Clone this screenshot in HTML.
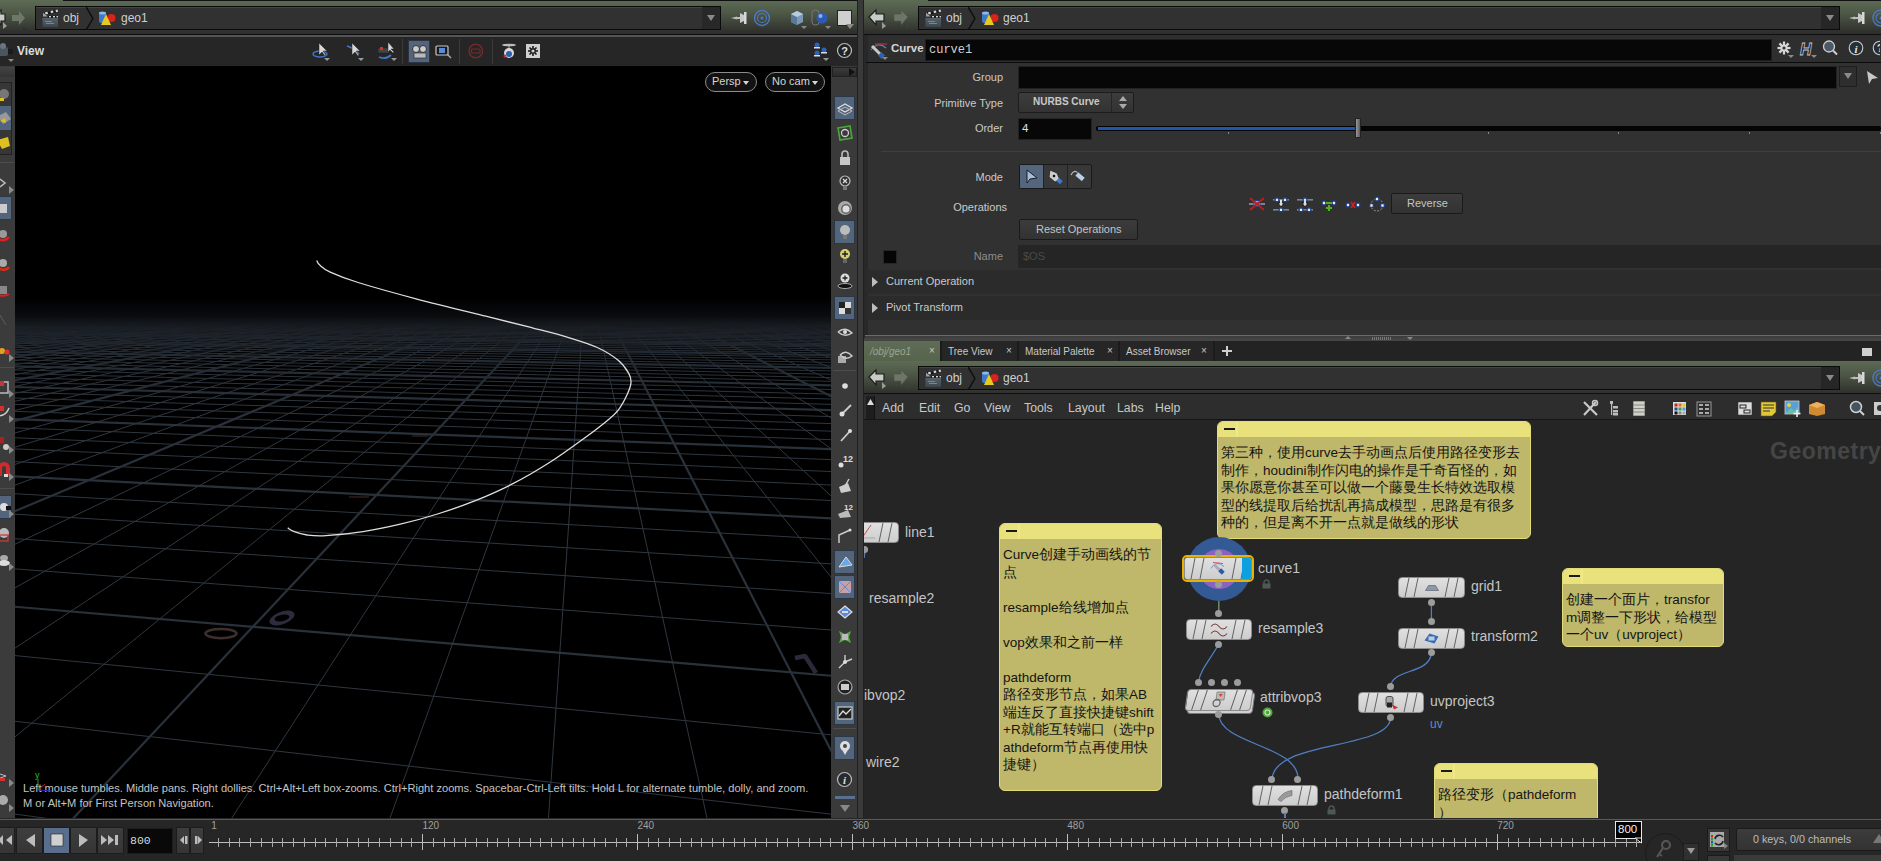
<!DOCTYPE html>
<html><head><meta charset="utf-8">
<style>
*{box-sizing:border-box}
html,body{margin:0;padding:0}
body{width:1881px;height:861px;overflow:hidden;background:#2b2b2b;position:relative;font-family:"Liberation Sans",sans-serif;color:#c8c8c8}
.a{position:absolute}
.nav{background:linear-gradient(#5d6b55 0px,#4c5645 14px,#363932 28px,#2f2f2f 32px)}
.pbox{position:absolute;background:#313131;border:1px solid #0a0a0a;box-shadow:inset 0 1px 0 #444}
.tk{stroke:#29313a;stroke-width:2.2}
.tn{stroke:#2f3740;stroke-width:1}
.lbl{position:absolute;font-size:12px;color:#c9c9c9;white-space:nowrap}
.note{position:absolute;background:#bfb76a;border-radius:6px;overflow:hidden;border:1px solid #e4dc78}
.note .hd{height:12px;background:#e8e17c;position:relative}
.note .hd:before{content:"";position:absolute;left:6px;top:6px;width:11px;height:2px;background:#1a1a1a}
.note .hd:after{content:"";position:absolute;left:18px;top:0;width:2px;height:15px;background:#efe78a}
.note .tx{font-size:13.5px;line-height:17.5px;color:#141414;padding:4px 3px;white-space:pre-wrap}
.node{position:absolute;height:20px;background:linear-gradient(#e4e4e4,#c9c9c9);border-radius:4px;border:1px solid #9a9a9a}
.nname{position:absolute;font-size:14px;color:#c4c4c4;white-space:nowrap}
.tbtn{position:absolute;top:827px;height:27px;background:linear-gradient(#3e3e3e,#353535);border:1px solid #1c1c1c;border-radius:1px}
.dot{position:absolute;width:7px;height:7px;border-radius:50%;background:#9c9c9c}
</style></head>
<body>

<!-- ============ LEFT PANE ============ -->
<div class="a nav" style="left:0;top:0;width:857px;height:35px"></div>
<div class="a" style="left:63px;top:0;width:794px;height:1px;background:#111"></div>
<div class="pbox" style="left:35px;top:6px;width:686px;height:24px"></div>
<svg width="0" height="0" style="position:absolute">
<defs>
<symbol id="i-obj" viewBox="0 0 16 18">
<rect x="0.5" y="9" width="15.5" height="9" fill="url(#objg)"/>
<path d="M3,12.5 h7 M4,14.5 h8" stroke="#8a9498" stroke-width="1.2" opacity="0.8"/>
<polygon points="0.5,4 15.5,0.5 16,3 1,6.5" fill="#151515"/>
<g fill="#d8d8d8"><polygon points="3,3.3 5.5,2.7 6,4.9 3.5,5.5"/><polygon points="8.5,2 11,1.4 11.5,3.6 9,4.2"/><polygon points="13.5,0.9 15.6,0.5 16,2.8 14,3.2"/></g>
<polygon points="1,3.5 5.5,7.5 1,7.5" fill="#9aa4a8"/>
<rect x="6" y="6.8" width="10" height="1.8" fill="#151515"/>
<g fill="#d8d8d8"><rect x="7" y="7" width="2" height="1.4"/><rect x="11" y="7" width="2" height="1.4"/><rect x="14.5" y="7" width="1.5" height="1.4"/></g>
</symbol>
<linearGradient id="objg" x1="0" y1="0" x2="0" y2="1"><stop offset="0" stop-color="#56626a"/><stop offset="1" stop-color="#3c464c"/></linearGradient>
<symbol id="i-geo" viewBox="0 0 18 15">
<rect x="1" y="1" width="7" height="11" rx="2" fill="#3f78c8"/>
<ellipse cx="4.5" cy="2" rx="3.5" ry="1.5" fill="#8fb6ea"/>
<circle cx="13.5" cy="7" r="4" fill="#d8221c"/>
<polygon points="8,3 13,14 3,14" fill="#e7c91f"/>
</symbol>
<symbol id="i-chev" viewBox="0 0 8 24"><polyline points="0,0 7,12 0,24" fill="none" stroke="#0e0e0e" stroke-width="1.5"/></symbol>
</defs></svg>
<div class="a" style="left:0;top:34px;width:857px;height:1px;background:#0c0c0c"></div>
<div class="a" style="left:0;top:35px;width:857px;height:2px;background:#555"></div>
<svg class="a" style="left:0;top:8px" width="30" height="22"><polygon points="-6,9 1,2 1,6 5,6 5,13 1,13 1,17" fill="#c9cbc6" stroke="#1d1f1c" stroke-width="1.2"/><polygon points="3,14 7,18 3,21" fill="#9a9c98"/><polygon points="12,7 19,7 19,3 25,10 19,17 19,13 12,13" fill="#6d7868"/><polygon points="23,19 27,22 23,25" fill="#2c3128"/></svg>
<svg class="a" style="left:42px;top:9px" width="16" height="18"><use href="#i-obj"/></svg>
<div class="a" style="left:63px;top:11px;font-size:12px;color:#cfcfcf">obj</div>
<svg class="a" style="left:86px;top:7px" width="8" height="23"><use href="#i-chev"/></svg>
<svg class="a" style="left:98px;top:11px" width="18" height="15"><use href="#i-geo"/></svg>
<div class="a" style="left:121px;top:11px;font-size:12px;color:#cfcfcf">geo1</div>
<div class="a" style="left:702px;top:7px;width:18px;height:22px;background:#282828"></div>
<div class="a" style="left:707px;top:15px;width:0;height:0;border-top:6px solid #8a8a8a;border-left:4px solid transparent;border-right:4px solid transparent"></div>

<div class="a" style="left:0;top:37px;width:857px;height:29px;background:#262626"></div>
<div class="a" style="left:17px;top:44px;font-size:12px;font-weight:bold;color:#dcdcdc">View</div>

<div class="a" style="left:0;top:66px;width:15px;height:752px;background:#3b3b3b"></div>
<div class="a" style="left:15px;top:66px;width:816px;height:752px;background:#000;overflow:hidden">
<svg width="816" height="752" style="position:absolute;left:0;top:0">
<defs>
<linearGradient id="fm" gradientUnits="userSpaceOnUse" x1="0" y1="250" x2="0" y2="340">
<stop offset="0" stop-color="#fff" stop-opacity="0"/>
<stop offset="0.18" stop-color="#fff" stop-opacity="0.5"/>
<stop offset="0.4" stop-color="#fff" stop-opacity="0.85"/>
<stop offset="1" stop-color="#fff" stop-opacity="1"/>
</linearGradient>
<mask id="gm" maskUnits="userSpaceOnUse" x="0" y="0" width="816" height="752"><rect x="0" y="0" width="816" height="752" fill="url(#fm)"/></mask>
<linearGradient id="haze" gradientUnits="userSpaceOnUse" x1="0" y1="232" x2="0" y2="290">
<stop offset="0" stop-color="#101317" stop-opacity="0"/>
<stop offset="0.5" stop-color="#101317" stop-opacity="1"/>
<stop offset="0.75" stop-color="#101317" stop-opacity="0.7"/>
<stop offset="1" stop-color="#101317" stop-opacity="0"/>
</linearGradient>
</defs>
<rect x="0" y="232" width="816" height="58" fill="url(#haze)"/>
<g mask="url(#gm)">
<line x1="-4.0" y1="747.5" x2="58.0" y2="756.0" class="tn"/>
<line x1="-4.0" y1="654.8" x2="820.0" y2="748.6" class="tn"/>
<line x1="-4.0" y1="589.2" x2="820.0" y2="669.2" class="tn"/>
<line x1="-4.0" y1="540.4" x2="820.0" y2="610.1" class="tk"/>
<line x1="-4.0" y1="502.6" x2="820.0" y2="564.3" class="tn"/>
<line x1="-4.0" y1="472.4" x2="820.0" y2="527.8" class="tn"/>
<line x1="-4.0" y1="447.9" x2="820.0" y2="498.1" class="tn"/>
<line x1="-4.0" y1="427.5" x2="820.0" y2="473.4" class="tn"/>
<line x1="-4.0" y1="410.2" x2="820.0" y2="452.5" class="tk"/>
<line x1="-4.0" y1="395.5" x2="820.0" y2="434.7" class="tn"/>
<line x1="-4.0" y1="382.7" x2="820.0" y2="419.2" class="tn"/>
<line x1="-4.0" y1="371.6" x2="820.0" y2="405.7" class="tn"/>
<line x1="-4.0" y1="361.7" x2="820.0" y2="393.8" class="tn"/>
<line x1="-4.0" y1="353.0" x2="820.0" y2="383.3" class="tk"/>
<line x1="-4.0" y1="345.2" x2="820.0" y2="373.8" class="tn"/>
<line x1="-4.0" y1="338.2" x2="820.0" y2="365.3" class="tn"/>
<line x1="-4.0" y1="331.9" x2="820.0" y2="357.7" class="tn"/>
<line x1="-4.0" y1="326.1" x2="820.0" y2="350.7" class="tn"/>
<line x1="-4.0" y1="320.9" x2="820.0" y2="344.3" class="tk"/>
<line x1="-4.0" y1="316.0" x2="820.0" y2="338.5" class="tn"/>
<line x1="-4.0" y1="311.6" x2="820.0" y2="333.1" class="tn"/>
<line x1="-4.0" y1="307.5" x2="820.0" y2="328.2" class="tn"/>
<line x1="-4.0" y1="303.8" x2="820.0" y2="323.6" class="tn"/>
<line x1="-4.0" y1="300.2" x2="820.0" y2="319.4" class="tk"/>
<line x1="-4.0" y1="297.0" x2="820.0" y2="315.4" class="tn"/>
<line x1="-4.0" y1="293.9" x2="820.0" y2="311.7" class="tn"/>
<line x1="-4.0" y1="291.1" x2="820.0" y2="308.3" class="tn"/>
<line x1="-4.0" y1="288.4" x2="820.0" y2="305.0" class="tn"/>
<line x1="-4.0" y1="285.9" x2="820.0" y2="302.0" class="tk"/>
<line x1="-4.0" y1="283.6" x2="820.0" y2="299.2" class="tn"/>
<line x1="-4.0" y1="281.3" x2="820.0" y2="296.5" class="tn"/>
<line x1="-4.0" y1="279.2" x2="820.0" y2="293.9" class="tn"/>
<line x1="-4.0" y1="277.2" x2="820.0" y2="291.5" class="tn"/>
<line x1="-4.0" y1="275.4" x2="820.0" y2="289.2" class="tk"/>
<line x1="-4.0" y1="273.6" x2="820.0" y2="287.1" class="tn"/>
<line x1="-4.0" y1="271.9" x2="820.0" y2="285.0" class="tn"/>
<line x1="-4.0" y1="270.3" x2="820.0" y2="283.1" class="tn"/>
<line x1="-4.0" y1="268.7" x2="820.0" y2="281.2" class="tn"/>
<line x1="-4.0" y1="267.3" x2="820.0" y2="279.5" class="tk"/>
<line x1="-4.0" y1="265.9" x2="820.0" y2="277.8" class="tn"/>
<line x1="-4.0" y1="264.6" x2="820.0" y2="276.2" class="tn"/>
<line x1="-4.0" y1="263.3" x2="820.0" y2="274.6" class="tn"/>
<line x1="-4.0" y1="262.1" x2="820.0" y2="273.1" class="tn"/>
<line x1="-4.0" y1="260.9" x2="820.0" y2="271.7" class="tk"/>
<line x1="-4.0" y1="259.8" x2="820.0" y2="270.4" class="tn"/>
<line x1="-4.0" y1="258.7" x2="820.0" y2="269.1" class="tn"/>
<line x1="-4.0" y1="257.7" x2="820.0" y2="267.8" class="tn"/>
<line x1="-4.0" y1="256.7" x2="820.0" y2="266.6" class="tn"/>
<line x1="-4.0" y1="255.7" x2="820.0" y2="265.4" class="tk"/>
<line x1="-4.0" y1="254.8" x2="820.0" y2="264.3" class="tn"/>
<line x1="-4.0" y1="253.9" x2="820.0" y2="263.2" class="tn"/>
<line x1="-4.0" y1="253.0" x2="820.0" y2="262.2" class="tn"/>
<line x1="-4.0" y1="252.2" x2="820.0" y2="261.2" class="tn"/>
<line x1="-4.0" y1="251.4" x2="820.0" y2="260.2" class="tk"/>
<line x1="-4.0" y1="250.6" x2="820.0" y2="259.3" class="tn"/>
<line x1="-4.0" y1="249.9" x2="820.0" y2="258.4" class="tn"/>
<line x1="-4.0" y1="249.2" x2="820.0" y2="257.5" class="tn"/>
<line x1="-4.0" y1="248.5" x2="820.0" y2="256.7" class="tn"/>
<line x1="-4.0" y1="247.8" x2="820.0" y2="255.9" class="tk"/>
<line x1="-4.0" y1="247.2" x2="820.0" y2="255.1" class="tn"/>
<line x1="-4.0" y1="246.5" x2="820.0" y2="254.3" class="tn"/>
<line x1="-4.0" y1="245.9" x2="820.0" y2="253.6" class="tn"/>
<line x1="-4.0" y1="245.3" x2="820.0" y2="252.9" class="tn"/>
<line x1="-4.0" y1="244.7" x2="820.0" y2="252.2" class="tk"/>
<line x1="-4.0" y1="244.2" x2="820.0" y2="251.5" class="tn"/>
<line x1="-4.0" y1="243.6" x2="820.0" y2="250.8" class="tn"/>
<line x1="-4.0" y1="243.1" x2="820.0" y2="250.2" class="tn"/>
<line x1="-4.0" y1="242.6" x2="820.0" y2="249.6" class="tn"/>
<line x1="-4.0" y1="242.1" x2="820.0" y2="248.9" class="tk"/>
<line x1="-4.0" y1="241.6" x2="820.0" y2="248.4" class="tn"/>
<line x1="-4.0" y1="241.1" x2="820.0" y2="247.8" class="tn"/>
<line x1="-4.0" y1="240.7" x2="820.0" y2="247.2" class="tn"/>
<line x1="-4.0" y1="240.2" x2="820.0" y2="246.7" class="tn"/>
<line x1="-4.0" y1="239.8" x2="820.0" y2="246.1" class="tk"/>
<line x1="-4.0" y1="240.1" x2="1.5" y2="239.8" class="tk"/>
<line x1="-4.0" y1="240.7" x2="10.0" y2="239.9" class="tn"/>
<line x1="-4.0" y1="241.4" x2="18.6" y2="239.9" class="tn"/>
<line x1="-4.0" y1="242.0" x2="27.2" y2="240.0" class="tn"/>
<line x1="-4.0" y1="242.7" x2="35.9" y2="240.1" class="tn"/>
<line x1="-4.0" y1="243.3" x2="44.6" y2="240.1" class="tk"/>
<line x1="-4.0" y1="244.0" x2="53.4" y2="240.2" class="tn"/>
<line x1="-4.0" y1="244.8" x2="62.1" y2="240.3" class="tn"/>
<line x1="-4.0" y1="245.6" x2="71.0" y2="240.3" class="tn"/>
<line x1="-4.0" y1="246.4" x2="79.8" y2="240.4" class="tn"/>
<line x1="-4.0" y1="247.2" x2="88.7" y2="240.5" class="tk"/>
<line x1="-4.0" y1="248.1" x2="97.7" y2="240.6" class="tn"/>
<line x1="-4.0" y1="249.0" x2="106.7" y2="240.6" class="tn"/>
<line x1="-4.0" y1="249.9" x2="115.7" y2="240.7" class="tn"/>
<line x1="-4.0" y1="250.9" x2="124.8" y2="240.8" class="tn"/>
<line x1="-4.0" y1="252.0" x2="133.9" y2="240.8" class="tk"/>
<line x1="-4.0" y1="253.0" x2="143.0" y2="240.9" class="tn"/>
<line x1="-4.0" y1="254.2" x2="152.2" y2="241.0" class="tn"/>
<line x1="-4.0" y1="255.4" x2="161.4" y2="241.0" class="tn"/>
<line x1="-4.0" y1="256.6" x2="170.7" y2="241.1" class="tn"/>
<line x1="-4.0" y1="257.9" x2="180.0" y2="241.2" class="tk"/>
<line x1="-4.0" y1="259.3" x2="189.4" y2="241.3" class="tn"/>
<line x1="-4.0" y1="260.8" x2="198.8" y2="241.3" class="tn"/>
<line x1="-4.0" y1="262.4" x2="208.2" y2="241.4" class="tn"/>
<line x1="-4.0" y1="264.0" x2="217.7" y2="241.5" class="tn"/>
<line x1="-4.0" y1="265.7" x2="227.2" y2="241.6" class="tk"/>
<line x1="-4.0" y1="267.6" x2="236.8" y2="241.6" class="tn"/>
<line x1="-4.0" y1="269.6" x2="246.4" y2="241.7" class="tn"/>
<line x1="-4.0" y1="271.7" x2="256.1" y2="241.8" class="tn"/>
<line x1="-4.0" y1="273.9" x2="265.8" y2="241.9" class="tn"/>
<line x1="-4.0" y1="276.3" x2="275.5" y2="241.9" class="tk"/>
<line x1="-4.0" y1="278.9" x2="285.3" y2="242.0" class="tn"/>
<line x1="-4.0" y1="281.7" x2="295.2" y2="242.1" class="tn"/>
<line x1="-4.0" y1="284.7" x2="305.1" y2="242.2" class="tn"/>
<line x1="-4.0" y1="287.9" x2="315.0" y2="242.2" class="tn"/>
<line x1="-4.0" y1="291.4" x2="325.0" y2="242.3" class="tk"/>
<line x1="-4.0" y1="295.3" x2="335.0" y2="242.4" class="tn"/>
<line x1="-4.0" y1="299.5" x2="345.1" y2="242.5" class="tn"/>
<line x1="-4.0" y1="304.1" x2="355.2" y2="242.5" class="tn"/>
<line x1="-4.0" y1="309.2" x2="365.4" y2="242.6" class="tn"/>
<line x1="-4.0" y1="314.8" x2="375.6" y2="242.7" class="tk"/>
<line x1="-4.0" y1="321.1" x2="385.9" y2="242.8" class="tn"/>
<line x1="-4.0" y1="328.2" x2="396.2" y2="242.9" class="tn"/>
<line x1="-4.0" y1="336.2" x2="406.6" y2="242.9" class="tn"/>
<line x1="-4.0" y1="345.4" x2="417.0" y2="243.0" class="tn"/>
<line x1="-4.0" y1="355.9" x2="427.5" y2="243.1" class="tk"/>
<line x1="-4.0" y1="368.1" x2="438.0" y2="243.2" class="tn"/>
<line x1="-4.0" y1="382.5" x2="448.6" y2="243.3" class="tn"/>
<line x1="-4.0" y1="399.8" x2="459.2" y2="243.4" class="tn"/>
<line x1="-4.0" y1="420.7" x2="469.9" y2="243.4" class="tn"/>
<line x1="-4.0" y1="446.8" x2="480.6" y2="243.5" class="tk"/>
<line x1="-4.0" y1="480.1" x2="491.4" y2="243.6" class="tn"/>
<line x1="-4.0" y1="524.0" x2="502.2" y2="243.7" class="tn"/>
<line x1="-4.0" y1="584.7" x2="513.1" y2="243.8" class="tn"/>
<line x1="-4.0" y1="674.1" x2="524.1" y2="243.9" class="tn"/>
<line x1="54.8" y1="756.0" x2="535.1" y2="243.9" class="tk"/>
<line x1="214.2" y1="756.0" x2="546.1" y2="244.0" class="tn"/>
<line x1="373.6" y1="756.0" x2="557.2" y2="244.1" class="tn"/>
<line x1="533.2" y1="756.0" x2="568.4" y2="244.2" class="tn"/>
<line x1="692.9" y1="756.0" x2="579.6" y2="244.3" class="tn"/>
<line x1="820.0" y1="692.3" x2="590.9" y2="244.4" class="tk"/>
<line x1="820.0" y1="516.0" x2="602.2" y2="244.5" class="tn"/>
<line x1="820.0" y1="433.5" x2="613.6" y2="244.5" class="tn"/>
<line x1="820.0" y1="385.6" x2="625.1" y2="244.6" class="tn"/>
<line x1="820.0" y1="354.3" x2="636.6" y2="244.7" class="tn"/>
<line x1="820.0" y1="332.3" x2="648.1" y2="244.8" class="tk"/>
<line x1="820.0" y1="315.9" x2="659.7" y2="244.9" class="tn"/>
<line x1="820.0" y1="303.3" x2="671.4" y2="245.0" class="tn"/>
<line x1="820.0" y1="293.3" x2="683.2" y2="245.1" class="tn"/>
<line x1="820.0" y1="285.1" x2="695.0" y2="245.2" class="tn"/>
<line x1="820.0" y1="278.3" x2="706.8" y2="245.3" class="tk"/>
<line x1="820.0" y1="272.6" x2="718.7" y2="245.4" class="tn"/>
<line x1="820.0" y1="267.7" x2="730.7" y2="245.5" class="tn"/>
<line x1="820.0" y1="263.5" x2="742.8" y2="245.5" class="tn"/>
<line x1="820.0" y1="259.8" x2="754.9" y2="245.6" class="tn"/>
<line x1="820.0" y1="256.6" x2="767.1" y2="245.7" class="tk"/>
<line x1="820.0" y1="253.7" x2="779.3" y2="245.8" class="tn"/>
<line x1="820.0" y1="251.1" x2="791.6" y2="245.9" class="tn"/>
<line x1="820.0" y1="248.8" x2="804.0" y2="246.0" class="tn"/>
<line x1="820.0" y1="246.7" x2="816.4" y2="246.1" class="tn"/>
</g>
<ellipse cx="206" cy="567.6" rx="15.5" ry="4.6" fill="none" stroke="#3e2f2c" stroke-width="2.6"/>
<g transform="translate(267,552) skewX(-38)"><ellipse cx="0" cy="0" rx="9" ry="5.5" fill="none" stroke="#2e2b3d" stroke-width="4"/></g>
<path d="M780,592 L790,590 L801,607" fill="none" stroke="#2c2a3a" stroke-width="4.5" stroke-linejoin="bevel"/>
<line x1="334" y1="431" x2="354" y2="431" stroke="#3a2422" stroke-width="1.2"/>
<line x1="397" y1="370" x2="413" y2="370" stroke="#3a2422" stroke-width="1.2"/>
<path d="M301.7,194.5 C302.2,195.3 302.4,197.2 304.7,199.1 C306.9,201.0 308.8,203.2 315.2,206.1 C321.6,209.0 328.8,212.1 343.1,216.5 C357.4,220.9 379.8,227.2 401.1,232.8 C422.4,238.4 451.4,245.4 470.8,250.2 C490.2,255.0 503.7,258.3 517.2,261.8 C530.8,265.3 541.2,267.8 552.1,271.1 C563.0,274.4 573.8,277.6 582.3,281.5 C590.8,285.4 598.0,290.0 603.2,294.3 C608.4,298.6 611.5,303.4 613.6,307.1 C615.7,310.8 616.2,312.9 616.0,316.4 C615.8,319.9 614.5,323.4 612.4,328.0 C610.3,332.6 606.6,339.7 603.2,344.2 C599.8,348.7 597.1,350.5 591.8,354.9 C586.5,359.3 580.9,363.7 571.3,370.7 C561.7,377.7 546.5,388.9 534.1,396.8 C521.7,404.7 509.3,411.9 496.9,418.2 C484.5,424.5 472.1,429.9 459.7,434.9 C447.3,439.9 434.9,444.1 422.5,448.0 C410.1,451.9 397.7,455.3 385.3,458.2 C372.9,461.1 360.4,463.7 348.0,465.6 C335.6,467.5 320.1,469.1 310.8,469.7 C301.5,470.3 297.5,469.7 292.2,469.0 C286.9,468.3 282.4,466.8 279.2,465.6 C275.9,464.4 273.8,462.5 272.7,461.9" fill="none" stroke="#dedede" stroke-width="1.3"/>
</svg>
</div>
<div class="a" style="left:831px;top:66px;width:26px;height:752px;background:#3a3a3a"></div>

<!-- divider -->
<div class="a" style="left:857px;top:0;width:7px;height:818px;background:#202020"></div>
<div class="a" style="left:858px;top:0;width:5px;height:818px;background:#3a3a3a"></div>

<!-- left toolbar -->
<svg class="a" style="left:0;top:40px" width="16" height="24"><rect x="-2" y="7" width="10" height="9" rx="2" fill="#4a5560"/><circle cx="3" cy="6" r="3" fill="#6a7580"/><rect x="8" y="9" width="5" height="5" fill="#1a1a1a"/><polygon points="8,19 14,19 11,22" fill="#8a8a8a"/></svg>
<svg class="a" style="left:310px;top:40px" width="24" height="24"><ellipse cx="10" cy="14" rx="7" ry="3" fill="none" stroke="#3d74c4" stroke-width="1.6"/><polygon points="9,3 9,15 12,12 15,16 16,15 13,11 17,11" fill="#d8d8d8" stroke="#222" stroke-width="0.5"/><polygon points="14,18 20,18 17,21" fill="#9a9a9a"/></svg>
<svg class="a" style="left:344px;top:40px" width="24" height="24"><path d="M3,6 Q10,8 15,14" fill="none" stroke="#3d74c4" stroke-width="1.8"/><polygon points="8,3 8,15 11,12 14,16 15,15 12,11 16,11" fill="#d8d8d8" stroke="#222" stroke-width="0.5"/><polygon points="14,18 20,18 17,21" fill="#9a9a9a"/></svg>
<svg class="a" style="left:376px;top:40px" width="24" height="24"><rect x="2" y="8" width="11" height="5" fill="#444" stroke="#222" stroke-width="0.6"/><rect x="4" y="7" width="3" height="3" fill="#c33"/><path d="M3,17 Q10,20 15,15" fill="none" stroke="#3d74c4" stroke-width="1.8"/><polygon points="12,2 12,12 14,10 17,13 18,12 15,9 18,9" fill="#d8d8d8" stroke="#222" stroke-width="0.5"/><polygon points="15,18 21,18 18,21" fill="#9a9a9a"/></svg>
<div class="a" style="left:402px;top:39px;width:1px;height:25px;background:#3a3a3a"></div>
<div class="a" style="left:408px;top:40px;width:22px;height:23px;background:#52657d;border:1px solid #2b3440"></div>
<svg class="a" style="left:409px;top:41px" width="22" height="22"><circle cx="7" cy="8" r="3.5" fill="#ccc" stroke="#333"/><circle cx="14" cy="8" r="3.5" fill="#ccc" stroke="#333"/><rect x="5" y="12" width="12" height="5" fill="#bbb" stroke="#333" stroke-width="0.7"/></svg>
<svg class="a" style="left:434px;top:42px" width="20" height="20"><rect x="2" y="4" width="12" height="9" rx="1" fill="#1a1a1a" stroke="#c8c8c8" stroke-width="1.2"/><rect x="5" y="6" width="6" height="5" fill="#5a8ad8"/><line x1="13" y1="12" x2="17" y2="16" stroke="#aaa" stroke-width="1.5"/></svg>
<div class="a" style="left:459px;top:39px;width:1px;height:25px;background:#3a3a3a"></div>
<svg class="a" style="left:467px;top:43px" width="18" height="18"><circle cx="8.75" cy="8" r="6.8" fill="none" stroke="#7b2a2a" stroke-width="1.3"/><rect x="4.5" y="6" width="8.5" height="4" rx="1" fill="none" stroke="#7b2a2a" stroke-width="1.1"/></svg>
<div class="a" style="left:492px;top:39px;width:1px;height:25px;background:#3a3a3a"></div>
<svg class="a" style="left:500px;top:42px" width="18" height="18"><ellipse cx="9" cy="3" rx="7" ry="1.3" fill="#bbb"/><line x1="9" y1="3" x2="9" y2="8" stroke="#bbb"/><circle cx="9" cy="11" r="5" fill="#d8d8d8"/><circle cx="9" cy="12" r="3" fill="#2a60b0"/><circle cx="5" cy="14" r="1.5" fill="#c33"/></svg>
<div class="a" style="left:526px;top:44px;width:14px;height:14px;background:#d0d0d0"></div>
<svg class="a" style="left:526px;top:44px" width="14" height="14"><g stroke="#1a1a1a" stroke-width="1.6"><line x1="7" y1="2" x2="7" y2="12"/><line x1="2" y1="7" x2="12" y2="7"/><line x1="3.5" y1="3.5" x2="10.5" y2="10.5"/><line x1="10.5" y1="3.5" x2="3.5" y2="10.5"/></g><circle cx="7" cy="7" r="2.2" fill="#d0d0d0" stroke="#1a1a1a" stroke-width="1.2"/></svg>
<svg class="a" style="left:810px;top:41px" width="22" height="22"><circle cx="7" cy="4" r="2.5" fill="#2d62b8"/><rect x="4" y="6" width="6" height="1.5" fill="#ddd"/><circle cx="14" cy="9" r="2.5" fill="#2d62b8"/><rect x="11" y="11" width="6" height="1.5" fill="#ddd"/><circle cx="7" cy="12" r="2.5" fill="#2d62b8"/><rect x="4" y="14" width="6" height="1.5" fill="#ddd"/><polygon points="13,17 19,17 16,20" fill="#9a9a9a"/></svg>
<svg class="a" style="left:836px;top:42px" width="17" height="17"><circle cx="8.5" cy="8.5" r="7" fill="#1d2226" stroke="#bbb" stroke-width="1.2"/><text x="8.5" y="12.5" font-size="11" font-weight="bold" fill="#e0e0e0" text-anchor="middle" font-family="Liberation Sans">?</text></svg>
<!-- persp -->
<div class="a" style="left:705px;top:72px;width:52px;height:20px;border:1px solid #8c8c8c;border-radius:10px;background:#121212"></div>
<div class="a" style="left:712px;top:75px;font-size:11px;color:#d6d6d6">Persp</div>
<div class="a" style="left:743px;top:81px;width:0;height:0;border-top:4px solid #d6d6d6;border-left:3.5px solid transparent;border-right:3.5px solid transparent"></div>
<div class="a" style="left:765px;top:72px;width:60px;height:20px;border:1px solid #8c8c8c;border-radius:10px;background:#121212"></div>
<div class="a" style="left:772px;top:75px;font-size:11px;color:#d6d6d6">No cam</div>
<div class="a" style="left:812px;top:81px;width:0;height:0;border-top:4px solid #d6d6d6;border-left:3.5px solid transparent;border-right:3.5px solid transparent"></div>
<!-- help text -->
<div class="a" style="left:23px;top:781px;font-size:11.1px;line-height:15px;color:#c4c4c4;white-space:nowrap">Left mouse tumbles. Middle pans. Right dollies. Ctrl+Alt+Left box-zooms. Ctrl+Right zooms. Spacebar-Ctrl-Left tilts. Hold L for alternate tumble, dolly, and zoom.<br>M or Alt+M for First Person Navigation.</div>
<svg class="a" style="left:28px;top:770px" width="40" height="25"><text x="7" y="8" font-size="9" fill="#2ac02a" font-family="Liberation Sans">y</text><line x1="10" y1="9" x2="10" y2="20" stroke="#2a9a2a" stroke-width="1"/><line x1="10" y1="20" x2="17" y2="14" stroke="#c02a2a" stroke-width="1"/><line x1="10" y1="20" x2="24" y2="21" stroke="#2a2ac0" stroke-width="1"/></svg>
<!-- columns -->
<div class="a" style="left:832px;top:67px;width:25px;height:10px;background:linear-gradient(#3c3c3c,#2a2a2a);border:1px solid #222"></div>
<div class="a" style="left:849px;top:68px;width:0;height:0;border-left:6px solid #111;border-top:4px solid transparent;border-bottom:4px solid transparent"></div>
<div class="a" style="left:834px;top:96px;width:21px;height:24px;background:#52657c;border:1px solid #2c3745"></div>
<svg class="a" style="left:836px;top:99px" width="18" height="18"><polygon points="2,9 9,5 16,9 9,13" fill="none" stroke="#ddd" stroke-width="1.3"/><polygon points="2,12 9,8 16,12 9,16" fill="none" stroke="#bbb" stroke-width="1"/></svg>
<svg class="a" style="left:836px;top:124px" width="18" height="18"><polygon points="2,4 14,2 16,14 4,16" fill="none" stroke="#4aa83a" stroke-width="1.6"/><circle cx="9" cy="9" r="3.5" fill="none" stroke="#ccc" stroke-width="1.3"/></svg>
<svg class="a" style="left:836px;top:149px" width="18" height="18"><rect x="4" y="8" width="10" height="8" fill="#c8c8c8"/><path d="M6,8 V5 a3,3 0 0 1 6,0 V8" fill="none" stroke="#bbb" stroke-width="1.6"/></svg>
<svg class="a" style="left:836px;top:174px" width="18" height="18"><circle cx="9" cy="7" r="5" fill="#333" stroke="#bbb" stroke-width="1.2"/><path d="M7,5 l4,4 M11,5 l-4,4" stroke="#ddd" stroke-width="1.2"/><rect x="7" y="12" width="4" height="4" fill="#777"/></svg>
<svg class="a" style="left:836px;top:199px" width="18" height="18"><circle cx="9" cy="9" r="7" fill="#aaa"/><circle cx="10" cy="10" r="5" fill="#666"/><circle cx="10" cy="10" r="3.5" fill="#ddd"/></svg>
<div class="a" style="left:834px;top:220px;width:21px;height:24px;background:#52657c;border:1px solid #2c3745"></div>
<svg class="a" style="left:836px;top:223px" width="18" height="18"><circle cx="9" cy="7" r="5" fill="#bbb"/><rect x="7" y="12" width="4" height="4" fill="#777"/></svg>
<svg class="a" style="left:836px;top:247px" width="18" height="18"><circle cx="9" cy="7" r="5" fill="#d8d070"/><path d="M9,4 v6 M6,7 h6" stroke="#222" stroke-width="1.5"/><rect x="7" y="12" width="4" height="4" fill="#666"/></svg>
<svg class="a" style="left:836px;top:272px" width="18" height="18"><circle cx="9" cy="6" r="4.5" fill="#ddd"/><path d="M9,3.5 v5 M6.5,6 h5" stroke="#222" stroke-width="1.3"/><ellipse cx="9" cy="14" rx="7" ry="2.5" fill="#111" stroke="#aaa"/></svg>
<div class="a" style="left:834px;top:296px;width:21px;height:24px;background:#52657c;border:1px solid #2c3745"></div>
<svg class="a" style="left:836px;top:299px" width="18" height="18"><rect x="3" y="3" width="12" height="12" fill="#ddd"/><rect x="3" y="3" width="6" height="6" fill="#222"/><rect x="9" y="9" width="6" height="6" fill="#333"/></svg>
<svg class="a" style="left:836px;top:324px" width="18" height="18"><path d="M2,8 Q9,2 16,9 Q9,14 2,8" fill="none" stroke="#ccc" stroke-width="1.5"/><circle cx="9" cy="8" r="2" fill="#ddd"/></svg>
<svg class="a" style="left:836px;top:347px" width="18" height="18"><rect x="2" y="9" width="8" height="7" fill="#aaa"/><path d="M4,8 Q10,2 16,9 Q10,14 4,8" fill="none" stroke="#ccc" stroke-width="1.5"/></svg>
<svg class="a" style="left:836px;top:377px" width="18" height="18"><circle cx="9" cy="9" r="2.8" fill="#ddd"/></svg>
<svg class="a" style="left:836px;top:402px" width="18" height="18"><line x1="15" y1="3" x2="7" y2="11" stroke="#ccc" stroke-width="1.8"/><circle cx="6" cy="12" r="2.5" fill="#ddd"/></svg>
<svg class="a" style="left:836px;top:427px" width="18" height="18"><line x1="15" y1="3" x2="5" y2="14" stroke="#ccc" stroke-width="1.8"/><circle cx="14" cy="4" r="2" fill="#ddd"/></svg>
<svg class="a" style="left:836px;top:452px" width="18" height="18"><circle cx="5" cy="13" r="2.5" fill="#ddd"/><text x="7" y="10" font-size="9" font-weight="bold" fill="#ddd" font-family="Liberation Sans">12</text></svg>
<svg class="a" style="left:836px;top:477px" width="18" height="18"><polygon points="3,10 12,6 15,14 5,16" fill="#ccc"/><line x1="13" y1="2" x2="9" y2="9" stroke="#ccc" stroke-width="1.5"/></svg>
<svg class="a" style="left:836px;top:502px" width="18" height="18"><polygon points="2,12 12,8 15,15 4,16" fill="#bbb"/><text x="8" y="8" font-size="8" font-weight="bold" fill="#ddd" font-family="Liberation Sans">12</text></svg>
<svg class="a" style="left:836px;top:527px" width="18" height="18"><path d="M3,16 V8 L14,3" fill="none" stroke="#ccc" stroke-width="1.5"/><circle cx="14" cy="3" r="1.5" fill="#ddd"/></svg>
<div class="a" style="left:834px;top:550px;width:21px;height:24px;background:#52657c;border:1px solid #2c3745"></div>
<svg class="a" style="left:836px;top:553px" width="18" height="18"><polygon points="3,14 10,4 16,12" fill="#6aa8e8"/><polygon points="3,14 16,12 10,4" fill="none" stroke="#ddd" stroke-width="1"/></svg>
<div class="a" style="left:834px;top:575px;width:21px;height:24px;background:#52657c;border:1px solid #2c3745"></div>
<svg class="a" style="left:836px;top:578px" width="18" height="18"><rect x="3" y="3" width="12" height="12" fill="#c8a0a8"/><path d="M3,3 l12,12 M15,3 l-12,12" stroke="#5a8ad8" stroke-width="1"/></svg>
<svg class="a" style="left:836px;top:603px" width="18" height="18"><polygon points="9,3 16,9 9,15 2,9" fill="#5a8ad8" stroke="#ddd" stroke-width="1.2"/><rect x="6" y="8" width="6" height="2" fill="#ddd"/></svg>
<svg class="a" style="left:836px;top:628px" width="18" height="18"><polygon points="3,3 9,6 15,3 13,9 15,15 9,12 3,15 5,9" fill="#5aa84a"/><rect x="6" y="6" width="6" height="6" fill="#bbb"/></svg>
<svg class="a" style="left:836px;top:653px" width="18" height="18"><path d="M9,9 L3,15 M9,9 L16,6 M9,9 L9,2" stroke="#ccc" stroke-width="1.4"/><circle cx="9" cy="9" r="2" fill="#ddd"/></svg>
<svg class="a" style="left:836px;top:678px" width="18" height="18"><circle cx="9" cy="9" r="7" fill="#222" stroke="#aaa" stroke-width="1.2"/><rect x="5" y="6" width="8" height="6" fill="#ccc"/></svg>
<div class="a" style="left:834px;top:701px;width:21px;height:24px;background:#52657c;border:1px solid #2c3745"></div>
<svg class="a" style="left:836px;top:704px" width="18" height="18"><rect x="2" y="3" width="14" height="12" fill="#222" stroke="#ccc" stroke-width="1.2"/><path d="M3,12 L7,7 L10,10 L15,5" fill="none" stroke="#ddd" stroke-width="1.3"/></svg>
<div class="a" style="left:834px;top:736px;width:21px;height:24px;background:#52657c;border:1px solid #2c3745"></div>
<svg class="a" style="left:836px;top:739px" width="18" height="18"><circle cx="9" cy="7" r="5" fill="#ddd"/><polygon points="5,9 13,9 9,16" fill="#ddd"/><circle cx="9" cy="7" r="2" fill="#444"/></svg>
<div class="a" style="left:833px;top:370px;width:23px;height:1px;background:#4d4d4d"></div>
<div class="a" style="left:833px;top:728px;width:23px;height:1px;background:#4d4d4d"></div>
<svg class="a" style="left:836px;top:771px" width="17" height="17"><circle cx="8.5" cy="8.5" r="7" fill="#262b30" stroke="#bbb" stroke-width="1.2"/><text x="8.5" y="13" font-size="11" font-style="italic" font-weight="bold" fill="#e0e0e0" text-anchor="middle" font-family="Liberation Serif">i</text></svg>
<div class="a" style="left:835px;top:796px;width:20px;height:3px;background:#5a7090"></div>
<div class="a" style="left:840px;top:805px;width:0;height:0;border-top:7px solid #888;border-left:5px solid transparent;border-right:5px solid transparent"></div>
<div class="a" style="left:0;top:67px;width:14px;height:10px;background:linear-gradient(#444,#333)"></div>
<div class="a" style="left:-2px;top:82px;width:14px;height:73px;background:#363636;border:1px solid #222"></div>
<div class="a" style="left:0;top:106px;width:11px;height:24px;background:#52657c"></div>
<svg class="a" style="left:0;top:87px" width="14" height="17"><circle cx="4" cy="7" r="5" fill="#777"/><rect x="0" y="11" width="4" height="3" fill="#e0c020"/></svg>
<svg class="a" style="left:0;top:110px" width="14" height="17"><polygon points="-2,6 6,2 11,9 3,14" fill="#999"/><polygon points="0,11 5,8 6,13" fill="#e0c020"/></svg>
<svg class="a" style="left:0;top:134px" width="14" height="17"><polygon points="-3,6 8,3 10,12 2,15" fill="#e0c020"/></svg>
<svg class="a" style="left:0;top:175px" width="14" height="17"><path d="M0,4 L5,8 L0,12" fill="none" stroke="#bbb" stroke-width="1.6"/></svg>
<div class="a" style="left:0;top:196px;width:12px;height:24px;background:#52657c;border:1px solid #2c3745;border-left:0"></div>
<svg class="a" style="left:0;top:200px" width="14" height="17"><rect x="-1" y="4" width="8" height="9" fill="#ccc"/></svg>
<svg class="a" style="left:0;top:228px" width="14" height="17"><circle cx="3" cy="6" r="4" fill="#999"/><path d="M-2,11 Q5,14 9,9" stroke="#e02020" stroke-width="2.5" fill="none"/></svg>
<svg class="a" style="left:0;top:257px" width="14" height="17"><circle cx="3" cy="6" r="4" fill="#aaa"/><path d="M-2,11 Q5,15 9,10" stroke="#e02a10" stroke-width="2.5" fill="none"/></svg>
<svg class="a" style="left:0;top:283px" width="14" height="17"><rect x="-1" y="3" width="8" height="8" fill="#888"/><path d="M-2,12 Q5,14 9,11" stroke="#e02020" stroke-width="2" fill="none"/></svg>
<svg class="a" style="left:0;top:313px" width="14" height="17"><path d="M0,2 L6,12" stroke="#555" stroke-width="1.2"/></svg>
<svg class="a" style="left:0;top:343px" width="14" height="17"><circle cx="2" cy="8" r="3" fill="#e0a020"/><circle cx="7" cy="9" r="2.5" fill="#e03030"/></svg>
<svg class="a" style="left:0;top:379px" width="14" height="17"><rect x="-1" y="3" width="9" height="11" fill="none" stroke="#bbb" stroke-width="1.5"/><rect x="-2" y="2" width="6" height="5" fill="#c33"/></svg>
<svg class="a" style="left:0;top:404px" width="14" height="17"><path d="M-2,12 Q6,12 9,4" stroke="#ccc" stroke-width="1.5" fill="none"/><rect x="-1" y="2" width="5" height="5" fill="#c33"/></svg>
<svg class="a" style="left:0;top:435px" width="14" height="17"><circle cx="6" cy="12" r="3" fill="#ccc"/><rect x="-1" y="2" width="5" height="6" fill="#a22"/></svg>
<svg class="a" style="left:0;top:462px" width="14" height="17"><path d="M0,14 V6 a4,4 0 0 1 8,0 V14" fill="none" stroke="#d02a2a" stroke-width="4"/><rect x="4" y="12" width="4" height="3" fill="#ddd"/></svg>
<div class="a" style="left:0;top:495px;width:12px;height:24px;background:#52657c;border:1px solid #2c3745;border-left:0"></div>
<svg class="a" style="left:0;top:499px" width="14" height="17"><circle cx="4" cy="8" r="4" fill="#ddd"/><rect x="6" y="7" width="5" height="4" fill="#111"/></svg>
<svg class="a" style="left:0;top:526px" width="14" height="17"><circle cx="4" cy="7" r="5" fill="#bbb"/><rect x="-1" y="9" width="9" height="6" fill="none" stroke="#d03a3a" stroke-width="1.3"/></svg>
<svg class="a" style="left:0;top:552px" width="14" height="17"><ellipse cx="4" cy="6" rx="4" ry="3" fill="#aaa"/><ellipse cx="4" cy="11" rx="6" ry="3" fill="#ddd"/></svg>
<svg class="a" style="left:0;top:768px" width="14" height="17"><path d="M0,6 l6,2 l-6,2" stroke="#bbb" fill="none"/><rect x="0" y="10" width="5" height="3" fill="#c33"/></svg>
<svg class="a" style="left:0;top:793px" width="14" height="17"><circle cx="3" cy="7" r="5" fill="#aaa"/></svg>
<div class="a" style="left:9px;top:186px;width:0;height:0;border-left:5px solid #8a8a8a;border-top:4px solid transparent;border-bottom:4px solid transparent"></div>
<div class="a" style="left:9px;top:354px;width:0;height:0;border-left:5px solid #8a8a8a;border-top:4px solid transparent;border-bottom:4px solid transparent"></div>
<div class="a" style="left:9px;top:390px;width:0;height:0;border-left:5px solid #8a8a8a;border-top:4px solid transparent;border-bottom:4px solid transparent"></div>
<div class="a" style="left:9px;top:415px;width:0;height:0;border-left:5px solid #8a8a8a;border-top:4px solid transparent;border-bottom:4px solid transparent"></div>
<div class="a" style="left:9px;top:446px;width:0;height:0;border-left:5px solid #8a8a8a;border-top:4px solid transparent;border-bottom:4px solid transparent"></div>
<div class="a" style="left:9px;top:473px;width:0;height:0;border-left:5px solid #8a8a8a;border-top:4px solid transparent;border-bottom:4px solid transparent"></div>
<div class="a" style="left:9px;top:510px;width:0;height:0;border-left:5px solid #8a8a8a;border-top:4px solid transparent;border-bottom:4px solid transparent"></div>
<div class="a" style="left:9px;top:563px;width:0;height:0;border-left:5px solid #8a8a8a;border-top:4px solid transparent;border-bottom:4px solid transparent"></div>
<div class="a" style="left:9px;top:779px;width:0;height:0;border-left:5px solid #8a8a8a;border-top:4px solid transparent;border-bottom:4px solid transparent"></div>
<div class="a" style="left:9px;top:804px;width:0;height:0;border-left:5px solid #8a8a8a;border-top:4px solid transparent;border-bottom:4px solid transparent"></div>
<div class="a" style="left:0;top:162px;width:14px;height:1px;background:#4d4d4d"></div>
<div class="a" style="left:0;top:367px;width:14px;height:1px;background:#4d4d4d"></div>
<div class="a" style="left:0;top:488px;width:14px;height:1px;background:#4d4d4d"></div>
<!-- ============ PARM PANE ============ -->
<div class="a nav" style="left:864px;top:0;width:1017px;height:35px"></div>
<div class="pbox" style="left:918px;top:6px;width:922px;height:24px"></div>
<div class="a" style="left:864px;top:35px;width:1017px;height:303px;background:#313131"></div>
<div class="a" style="left:864px;top:34px;width:1017px;height:1px;background:#0e0e0e"></div>
<div class="a" style="left:866px;top:35px;width:1015px;height:27px;background:#2e2e2e"></div>

<!-- right nav -->
<div class="a" style="left:928px;top:0;width:953px;height:1px;background:#111"></div>
<svg class="a" style="left:866px;top:8px" width="50" height="22">
<polygon points="3,9 10,2 10,6 18,6 18,13 10,13 10,17" fill="#c9cbc6" stroke="#1d1f1c" stroke-width="1.2"/>
<polygon points="16,14 20,18 16,21" fill="#9a9c98"/>
<polygon points="42,9 35,2 35,6 28,6 28,13 35,13 35,17" fill="#6c7567" stroke="#4a5046" stroke-width="0.5"/>
<polygon points="40,14 44,18 40,21" fill="#3c4238"/>
</svg>
<svg class="a" style="left:925px;top:9px" width="16" height="18"><use href="#i-obj"/></svg>
<div class="a" style="left:946px;top:11px;font-size:12px;color:#cfcfcf">obj</div>
<svg class="a" style="left:968px;top:7px" width="8" height="23"><use href="#i-chev"/></svg>
<svg class="a" style="left:981px;top:11px" width="18" height="15"><use href="#i-geo"/></svg>
<div class="a" style="left:1003px;top:11px;font-size:12px;color:#cfcfcf">geo1</div>
<div class="a" style="left:1821px;top:7px;width:18px;height:22px;background:#262626"></div>
<div class="a" style="left:1826px;top:15px;width:0;height:0;border-top:6px solid #8a8a8a;border-left:4px solid transparent;border-right:4px solid transparent"></div>
<svg class="a" style="left:1849px;top:11px" width="18" height="14"><polygon points="0,7 6,5.5 6,8.5" fill="#bbb"/><rect x="6" y="6" width="3" height="2" fill="#bbb"/><polygon points="9,2 13,4 13,10 9,12" fill="#c8c8c8"/><rect x="13" y="1" width="2.5" height="12" fill="#d8d8d8"/></svg>
<svg class="a" style="left:1872px;top:8px" width="12" height="20"><circle cx="9" cy="10" r="8" fill="none" stroke="#4a78c0" stroke-width="1.5"/><circle cx="9" cy="10" r="5" fill="none" stroke="#4a78c0" stroke-width="1.2"/><circle cx="9" cy="10" r="1.5" fill="#4a78c0"/></svg>
<!-- left nav icons -->
<svg class="a" style="left:731px;top:11px" width="18" height="14"><polygon points="0,7 6,5.5 6,8.5" fill="#bbb"/><rect x="6" y="6" width="3" height="2" fill="#bbb"/><polygon points="9,2 13,4 13,10 9,12" fill="#c8c8c8"/><rect x="13" y="1" width="2.5" height="12" fill="#d8d8d8"/></svg>
<svg class="a" style="left:753px;top:9px" width="18" height="18"><circle cx="9" cy="9" r="7.5" fill="none" stroke="#4a78c0" stroke-width="1.5"/><circle cx="9" cy="9" r="4.5" fill="none" stroke="#4a78c0" stroke-width="1.2"/><circle cx="9" cy="9" r="1.5" fill="#4a78c0"/></svg>
<svg class="a" style="left:788px;top:9px" width="20" height="20"><polygon points="3,5 9,2 15,5 15,13 9,16 3,13" fill="#7a98b8"/><polygon points="3,5 9,8 9,16 3,13" fill="#5a7898"/><polygon points="3,5 9,2 15,5 9,8" fill="#b8cce0"/><polygon points="13,17 19,17 16,20" fill="#8a8a8a"/></svg>
<svg class="a" style="left:811px;top:9px" width="22" height="20"><rect x="1" y="1" width="7" height="15" rx="3" fill="none" stroke="#777" stroke-width="1"/><circle cx="11" cy="9" r="5.5" fill="#2d5ab5"/><circle cx="9.5" cy="7" r="2" fill="#8ab0f0"/><polygon points="14,17 20,17 17,20" fill="#8a8a8a"/></svg>
<div class="a" style="left:837px;top:10px;width:15px;height:16px;background:#cfcfcf;border:1px solid #222"></div>
<div class="a" style="left:846px;top:24px;width:0;height:0;border-top:5px solid #8a8a8a;border-left:4px solid transparent;border-right:4px solid transparent"></div>
<!-- parm header icons -->
<svg class="a" style="left:868px;top:40px" width="24" height="22">
<path d="M3,10 Q10,1 18,8" fill="none" stroke="#4a88d0" stroke-width="1.2"/>
<line x1="7" y1="4" x2="19" y2="4" stroke="#d83030" stroke-width="1"/>
<line x1="4" y1="6" x2="14" y2="16" stroke="#c8c8c8" stroke-width="3"/>
<rect x="11" y="13" width="5" height="5" fill="#2a62b8" transform="rotate(45 13.5 15.5)"/>
<polygon points="14,17 20,17 17,20" fill="#8a8a8a"/>
</svg>
<svg class="a" style="left:1774px;top:38px" width="106" height="22">
<g transform="translate(10,10)"><g stroke="#d6d6d6" stroke-width="2.2"><line x1="0" y1="-6.5" x2="0" y2="6.5"/><line x1="-6.5" y1="0" x2="6.5" y2="0"/><line x1="-4.6" y1="-4.6" x2="4.6" y2="4.6"/><line x1="4.6" y1="-4.6" x2="-4.6" y2="4.6"/></g><circle r="3.6" fill="#d6d6d6"/><circle r="1.6" fill="#333"/></g>
<polygon points="14,17 20,17 17,20" fill="#8a8a8a"/>
<text x="26" y="17" font-size="16" font-weight="bold" font-style="italic" fill="#0d1a40" stroke="#c8c8c8" stroke-width="0.8" font-family="Liberation Sans">H</text>
<polygon points="37,17 43,17 40,20" fill="#8a8a8a"/>
<circle cx="55" cy="8.5" r="5.5" fill="#4a5a68" stroke="#cfcfcf" stroke-width="1.3"/><line x1="59" y1="12.5" x2="63" y2="16.5" stroke="#cfcfcf" stroke-width="2"/>
<circle cx="82" cy="10" r="6.8" fill="#263038" stroke="#cfcfcf" stroke-width="1.1"/><text x="82" y="14.5" font-size="11" font-style="italic" font-weight="bold" fill="#e8e8e8" text-anchor="middle" font-family="Liberation Serif">i</text>
<circle cx="106" cy="10" r="6.8" fill="#263038" stroke="#cfcfcf" stroke-width="1.1"/><text x="106" y="14" font-size="10" font-weight="bold" fill="#e8e8e8" text-anchor="middle" font-family="Liberation Sans">?</text>
</svg>
<svg class="a" style="left:1866px;top:70px" width="14" height="16"><polygon points="1,1 12,8 6,9 3,14" fill="#c8c8c8"/></svg>
<!-- parm contents -->
<div class="a" style="left:864px;top:35px;width:4px;height:303px;background:#282828"></div>
<div class="a" style="left:866px;top:62px;width:1015px;height:1px;background:#0c0c0c"></div>
<div class="a" style="left:891px;top:42px;font-size:11.5px;font-weight:bold;color:#d6d6d6">Curve</div>
<div class="a" style="left:925px;top:39px;width:847px;height:22px;background:#070707;border:1px solid #1c1c1c"></div>
<div class="a" style="left:929px;top:43px;font-family:'Liberation Mono',monospace;font-size:12px;color:#d0d0d0">curve1</div>
<div class="lbl" style="right:878px;top:71px;font-size:11px">Group</div>
<div class="a" style="left:1018px;top:66px;width:819px;height:23px;background:#070707;border:1px solid #222"></div>
<div class="a" style="left:1839px;top:66px;width:18px;height:21px;background:#2e2e2e;border:1px solid #1e1e1e"></div>
<div class="a" style="left:1844px;top:73px;width:0;height:0;border-top:6px solid #8a8a8a;border-left:4px solid transparent;border-right:4px solid transparent"></div>
<div class="lbl" style="right:878px;top:97px;font-size:11px">Primitive Type</div>
<div class="a" style="left:1018px;top:92px;width:116px;height:21px;background:linear-gradient(#3c3c3c,#333);border:1px solid #1c1c1c;border-radius:2px"></div>
<div class="a" style="left:1111px;top:93px;width:1px;height:19px;background:#262626"></div>
<div class="a" style="left:1033px;top:96px;font-size:10px;font-weight:bold;color:#c8c8c8">NURBS Curve</div>
<div class="lbl" style="right:878px;top:122px;font-size:11px">Order</div>
<div class="a" style="left:1018px;top:118px;width:74px;height:22px;background:#070707;border:1px solid #222"></div>
<div class="a" style="left:1022px;top:122px;font-size:11.5px;color:#e0e0e0">4</div>
<div class="a" style="left:1096px;top:126px;width:785px;height:5px;background:#050505;border-radius:2px"></div>
<div class="a" style="left:1098px;top:127px;width:260px;height:3px;background:#2256ab"></div>
<div class="a" style="left:1355px;top:118px;width:6px;height:20px;background:linear-gradient(90deg,#9a9a9a,#5a5a5a);border:1px solid #222;border-radius:1px"></div>
<div class="a" style="left:881px;top:151px;width:1000px;height:1px;background:#3f3f3f"></div>
<div class="lbl" style="right:878px;top:171px;font-size:11px">Mode</div>
<div class="a" style="left:1019px;top:164px;width:73px;height:25px;background:#383838;border:1px solid #1a1a1a;border-radius:2px"></div>
<div class="a" style="left:1020px;top:165px;width:23px;height:23px;background:#53667e"></div>
<div class="a" style="left:1043px;top:165px;width:1px;height:23px;background:#222"></div>
<div class="a" style="left:1067px;top:165px;width:1px;height:23px;background:#222"></div>
<div class="lbl" style="right:874px;top:201px;font-size:11px">Operations</div>
<svg class="a" style="left:1245px;top:195px" width="145" height="20"><rect x="4" y="8" width="16" height="2" fill="#7a8590"/><rect x="9" y="5.5" width="6" height="6" fill="#9ab" stroke="#1c3f8a" stroke-width="1"/><g stroke="#b82020" stroke-width="2"><line x1="5" y1="3" x2="19" y2="15"/><line x1="19" y1="3" x2="5" y2="15"/></g><rect x="28" y="4" width="16" height="1.6" fill="#7a8590"/><rect x="28" y="14" width="16" height="1.6" fill="#7a8590"/><rect x="30.2" y="3.0" width="3.6" height="3.6" rx="0.8" fill="#f0f0e8" stroke="#1c3f8a" stroke-width="1.3"/><rect x="38.2" y="3.0" width="3.6" height="3.6" rx="0.8" fill="#f0f0e8" stroke="#1c3f8a" stroke-width="1.3"/><rect x="34.2" y="13.0" width="3.6" height="3.6" rx="0.8" fill="#f0f0e8" stroke="#1c3f8a" stroke-width="1.3"/><polygon points="33,8 39,8 36,12" fill="#ddd" stroke="#111" stroke-width="0.8"/><rect x="35" y="5" width="2" height="4" fill="#ddd"/><rect x="52" y="4" width="16" height="1.6" fill="#7a8590"/><rect x="52" y="14" width="16" height="1.6" fill="#7a8590"/><rect x="58.2" y="3.0" width="3.6" height="3.6" rx="0.8" fill="#f0f0e8" stroke="#1c3f8a" stroke-width="1.3"/><rect x="54.2" y="13.0" width="3.6" height="3.6" rx="0.8" fill="#f0f0e8" stroke="#1c3f8a" stroke-width="1.3"/><rect x="62.2" y="13.0" width="3.6" height="3.6" rx="0.8" fill="#f0f0e8" stroke="#1c3f8a" stroke-width="1.3"/><polygon points="57,8 63,8 60,12" fill="#ddd" stroke="#111" stroke-width="0.8"/><rect x="59" y="5" width="2" height="4" fill="#ddd"/><rect x="77.2" y="6.2" width="3.6" height="3.6" rx="0.8" fill="#f0f0e8" stroke="#1c3f8a" stroke-width="1.3"/><rect x="87.2" y="6.2" width="3.6" height="3.6" rx="0.8" fill="#f0f0e8" stroke="#1c3f8a" stroke-width="1.3"/><rect x="81" y="7" width="6" height="2" fill="#50b020"/><rect x="83" y="10" width="2" height="6" fill="#50b020"/><rect x="81" y="12" width="6" height="2" fill="#50b020"/><rect x="101.2" y="8.2" width="3.6" height="3.6" rx="0.8" fill="#f0f0e8" stroke="#1c3f8a" stroke-width="1.3"/><rect x="111.2" y="8.2" width="3.6" height="3.6" rx="0.8" fill="#f0f0e8" stroke="#1c3f8a" stroke-width="1.3"/><g stroke="#d02020" stroke-width="1.6"><line x1="106" y1="7" x2="110" y2="13"/><line x1="110" y1="7" x2="106" y2="13"/></g><circle cx="132" cy="10" r="6" fill="none" stroke="#8a9aa8" stroke-width="1" stroke-dasharray="2 1.5"/><rect x="130.2" y="2.2" width="3.6" height="3.6" rx="0.8" fill="#f0f0e8" stroke="#1c3f8a" stroke-width="1.3"/><rect x="124.7" y="8.7" width="3.6" height="3.6" rx="0.8" fill="#f0f0e8" stroke="#1c3f8a" stroke-width="1.3"/><rect x="135.7" y="8.7" width="3.6" height="3.6" rx="0.8" fill="#f0f0e8" stroke="#1c3f8a" stroke-width="1.3"/></svg>
<svg class="a" style="left:1020px;top:165px" width="72" height="23">
<polygon points="7,5 7,18 10,14 17,13" fill="#a8c0e0" stroke="#1a1a1a" stroke-width="1"/>
<polygon points="30,5 37,8 40,15 35,17 29,12" fill="#ccc" stroke="#222" stroke-width="0.8"/><circle cx="34" cy="11" r="1.3" fill="#111"/><rect x="37" y="14" width="5" height="4" fill="#3a7ad0" transform="rotate(45 39.5 16)"/>
<path d="M51,10 Q54,4 58,8" fill="none" stroke="#bbb" stroke-width="1.2"/><rect x="56" y="9" width="9" height="5" fill="#b8d0e8" transform="rotate(40 60 11)" stroke="#333" stroke-width="0.6"/>
</svg>
<svg class="a" style="left:1118px;top:94px" width="10" height="17"><polygon points="5,2 9,7 1,7" fill="#aaa"/><polygon points="5,15 9,10 1,10" fill="#aaa"/></svg>
<div class="a" style="left:1228px;top:132px;width:1px;height:2px;background:#888"></div><div class="a" style="left:1488px;top:132px;width:1px;height:2px;background:#888"></div><div class="a" style="left:1618px;top:132px;width:1px;height:2px;background:#888"></div><div class="a" style="left:1749px;top:132px;width:1px;height:2px;background:#888"></div><div class="a" style="left:1880px;top:132px;width:1px;height:2px;background:#888"></div>

<div class="a" style="left:1391px;top:193px;width:72px;height:21px;background:linear-gradient(#3c3c3c,#323232);border:1px solid #1a1a1a;border-radius:2px"></div>
<div class="a" style="left:1407px;top:197px;font-size:11px;color:#c4c4c4">Reverse</div>
<div class="a" style="left:1019px;top:219px;width:119px;height:21px;background:linear-gradient(#3c3c3c,#323232);border:1px solid #1a1a1a;border-radius:2px"></div>
<div class="a" style="left:1036px;top:223px;font-size:11px;color:#c4c4c4">Reset Operations</div>
<div class="a" style="left:883px;top:250px;width:14px;height:14px;background:#050505;border:1px solid #262626"></div>
<div class="lbl" style="right:878px;top:250px;font-size:11px;color:#8c8c8c">Name</div>
<div class="a" style="left:1018px;top:245px;width:863px;height:23px;background:#252525"></div>
<div class="a" style="left:1023px;top:250px;font-size:11px;color:#4a4a4a">$OS</div>
<div class="a" style="left:866px;top:270px;width:1015px;height:24px;background:#2b2b2b"></div>
<div class="a" style="left:866px;top:296px;width:1015px;height:24px;background:#2b2b2b"></div>
<div class="a" style="left:872px;top:277px;width:0;height:0;border-left:6px solid #bdbdbd;border-top:5px solid transparent;border-bottom:5px solid transparent"></div>
<div class="a" style="left:872px;top:303px;width:0;height:0;border-left:6px solid #bdbdbd;border-top:5px solid transparent;border-bottom:5px solid transparent"></div>
<div class="lbl" style="left:886px;top:275px;font-size:11px">Current Operation</div>
<div class="lbl" style="left:886px;top:301px;font-size:11px">Pivot Transform</div>
<div class="a" style="left:865px;top:335px;width:1016px;height:1px;background:#6a6a6a"></div>
<div class="a" style="left:865px;top:336px;width:1016px;height:5px;background:#3e3e3e"></div>

<!-- ============ TAB BAR / NETWORK ============ -->
<div class="a" style="left:864px;top:338px;width:1017px;height:3px;background:#444"></div>
<div class="a" style="left:864px;top:341px;width:1017px;height:20px;background:#232323"></div>
<div class="a nav" style="left:864px;top:361px;width:1017px;height:33px"></div>
<div class="pbox" style="left:918px;top:366px;width:922px;height:24px"></div>
<div class="a" style="left:864px;top:395px;width:1017px;height:25px;background:#2d2d2d"></div>
<div class="a" style="left:864px;top:420px;width:1017px;height:398px;background:#252525;overflow:hidden">
<div class="a" style="left:906px;top:18px;font-size:23px;font-weight:bold;color:#454545;letter-spacing:0.5px">Geometry</div>
<svg width="1017" height="398" style="position:absolute;left:0;top:0">
<g transform="translate(-864,-420)" fill="none" stroke-width="1.3">
<line x1="1218.8" y1="585" x2="1218.8" y2="613" stroke="#7d9a6a"/>
<line x1="1431.4" y1="602" x2="1431.4" y2="622" stroke="#4f7fc0"/>
<path d="M1218.8,644 C1210,660 1200,670 1198.6,682" stroke="#4f7fc0"/>
<path d="M1431.4,652.6 C1430,675 1392,668 1390.6,686.6" stroke="#4f7fc0"/>
<path d="M1218.8,714.5 C1220,745 1300,745 1298,780" stroke="#4f7fc0"/>
<path d="M1390.6,717.8 C1390,750 1272,740 1272,780" stroke="#4f7fc0"/>
</g>
</svg>
</div>
<!-- notes -->
<div class="note" style="left:1217px;top:421px;width:314px;height:118px"><div class="hd" style="height:15px"></div><div class="tx" style="padding-top:7px">第三种，使用curve去手动画点后使用路径变形去
制作，houdini制作闪电的操作是千奇百怪的，如
果你愿意你甚至可以做一个藤曼生长特效选取模
型的线提取后给扰乱再搞成模型，思路是有很多
种的，但是离不开一点就是做线的形状</div></div>
<div class="note" style="left:999px;top:523px;width:163px;height:268px"><div class="hd" style="height:15px"></div><div class="tx" style="padding-top:7px">Curve创建手动画线的节
点

resample给线增加点

vop效果和之前一样

pathdeform
路径变形节点，如果AB
端连反了直接快捷键shift
+R就能互转端口（选中p
athdeform节点再使用快
捷键）</div></div>
<div class="note" style="left:1562px;top:568px;width:162px;height:79px"><div class="hd" style="height:15px"></div><div class="tx" style="padding-top:7px">创建一个面片，transfor
m调整一下形状，给模型
一个uv（uvproject）</div></div>
<div class="note" style="left:1434px;top:763px;width:164px;height:70px;border-bottom-left-radius:0;border-bottom-right-radius:0"><div class="hd" style="height:15px"></div><div class="tx" style="padding-top:7px">路径变形（pathdeform
）</div></div>
<!-- nodes -->
<div class="a" style="left:1187px;top:537px;width:64px;height:64px;border-radius:50%;background:#345a95"></div>
<div class="a" style="left:1199px;top:549px;width:40px;height:40px;border-radius:50%;background:#8a62c2"></div>
<div class="a" style="left:1182px;top:555px;width:72px;height:27px;border:2px solid #e6b400;border-radius:5px;background:#1a1a1a"></div><div class="a" style="left:1184px;top:557px;width:68px;height:23px;background:linear-gradient(#e0e0e0,#cdcdcd);border-radius:3px;border:1px solid #8c8c8c;overflow:hidden"><svg width="68" height="23" style="position:absolute;left:-1px;top:-1px"><line x1="7" y1="22" x2="11" y2="1" stroke="#555" stroke-width="0.9"/><line x1="16" y1="22" x2="20" y2="1" stroke="#555" stroke-width="0.9"/><line x1="48" y1="22" x2="52" y2="1" stroke="#555" stroke-width="0.9"/><line x1="57" y1="22" x2="61" y2="1" stroke="#555" stroke-width="0.9"/><g transform="translate(34.0,11.5)"><line x1="-5" y1="-6" x2="5" y2="-5" stroke="#d03030" stroke-width="0.8"/><path d="M-7,0 Q-2,-9 6,-2" fill="none" stroke="#4a8ad0" stroke-width="0.8"/><line x1="-4" y1="-4" x2="3" y2="3" stroke="#aab" stroke-width="3"/><rect x="1" y="1" width="5" height="4" fill="#2a5ab0" transform="rotate(45 3.5 3)"/></g></svg></div><div class="a" style="left:1242px;top:558px;width:9px;height:21px;background:#0da0e0;border-radius:0 2px 2px 0"></div><div class="a" style="left:1186px;top:619px;width:66px;height:21px;background:linear-gradient(#e0e0e0,#cdcdcd);border-radius:4px;border:1px solid #8c8c8c;overflow:hidden"><svg width="66" height="21" style="position:absolute;left:-1px;top:-1px"><line x1="7" y1="20" x2="11" y2="1" stroke="#555" stroke-width="0.9"/><line x1="16" y1="20" x2="20" y2="1" stroke="#555" stroke-width="0.9"/><line x1="46" y1="20" x2="50" y2="1" stroke="#555" stroke-width="0.9"/><line x1="55" y1="20" x2="59" y2="1" stroke="#555" stroke-width="0.9"/><g transform="translate(33.0,10.5)" fill="none" stroke-width="1.1"><path d="M-8,-3 q4,-5 8,0 t8,0" stroke="#7a3a3a"/><path d="M-8,4 q4,-5 8,0 t8,0" stroke="#7a3a3a"/></g></svg></div><div class="a" style="left:1188px;top:692px;width:66px;height:22px;background:#d0d0d0;border-radius:4px;border:1px solid #777;transform:skewX(-8deg);"></div><div class="a" style="left:1186px;top:689px;width:66px;height:22px;background:linear-gradient(#e0e0e0,#cdcdcd);border-radius:4px;border:1px solid #8c8c8c;transform:skewX(-8deg);overflow:hidden"><svg width="66" height="22" style="position:absolute;left:-1px;top:-1px"><line x1="7" y1="21" x2="11" y2="1" stroke="#555" stroke-width="0.9"/><line x1="16" y1="21" x2="20" y2="1" stroke="#555" stroke-width="0.9"/><line x1="46" y1="21" x2="50" y2="1" stroke="#555" stroke-width="0.9"/><line x1="55" y1="21" x2="59" y2="1" stroke="#555" stroke-width="0.9"/><g transform="translate(33.0,11.0)"><rect x="-3" y="-8" width="8" height="8" fill="#bbb" stroke="#666" stroke-width="0.6"/><path d="M-1,-6 l2,3 l2,-3" fill="#e04020"/><circle cx="-2" cy="3" r="3.5" fill="none" stroke="#666" stroke-width="1.3"/></g></svg></div><div class="a" style="left:1398px;top:577px;width:67px;height:21px;background:linear-gradient(#e0e0e0,#cdcdcd);border-radius:4px;border:1px solid #8c8c8c;overflow:hidden"><svg width="67" height="21" style="position:absolute;left:-1px;top:-1px"><line x1="7" y1="20" x2="11" y2="1" stroke="#555" stroke-width="0.9"/><line x1="16" y1="20" x2="20" y2="1" stroke="#555" stroke-width="0.9"/><line x1="47" y1="20" x2="51" y2="1" stroke="#555" stroke-width="0.9"/><line x1="56" y1="20" x2="60" y2="1" stroke="#555" stroke-width="0.9"/><g transform="translate(33.5,10.5)"><polygon points="-6,3 -3,-2 4,-2 7,3" fill="#8a9aa8" stroke="#556" stroke-width="0.6"/></g></svg></div><div class="a" style="left:1398px;top:628px;width:67px;height:21px;background:linear-gradient(#e0e0e0,#cdcdcd);border-radius:4px;border:1px solid #8c8c8c;overflow:hidden"><svg width="67" height="21" style="position:absolute;left:-1px;top:-1px"><line x1="7" y1="20" x2="11" y2="1" stroke="#555" stroke-width="0.9"/><line x1="16" y1="20" x2="20" y2="1" stroke="#555" stroke-width="0.9"/><line x1="47" y1="20" x2="51" y2="1" stroke="#555" stroke-width="0.9"/><line x1="56" y1="20" x2="60" y2="1" stroke="#555" stroke-width="0.9"/><g transform="translate(33.5,10.5)"><polygon points="-7,2 -2,-5 7,-2 3,5" fill="#3a6ab8"/><rect x="-3" y="-2" width="6" height="4" fill="#bcd"/></g></svg></div><div class="a" style="left:1358px;top:692px;width:66px;height:21px;background:linear-gradient(#e0e0e0,#cdcdcd);border-radius:4px;border:1px solid #8c8c8c;overflow:hidden"><svg width="66" height="21" style="position:absolute;left:-1px;top:-1px"><line x1="7" y1="20" x2="11" y2="1" stroke="#555" stroke-width="0.9"/><line x1="16" y1="20" x2="20" y2="1" stroke="#555" stroke-width="0.9"/><line x1="46" y1="20" x2="50" y2="1" stroke="#555" stroke-width="0.9"/><line x1="55" y1="20" x2="59" y2="1" stroke="#555" stroke-width="0.9"/><g transform="translate(33.0,10.5)"><rect x="-5" y="-6" width="7" height="10" rx="2" fill="#aaa" stroke="#333" stroke-width="0.8"/><rect x="-4" y="0" width="5" height="5" fill="#222"/><path d="M1,2 l6,3 l-4,2z" fill="#c83030"/></g></svg></div><div class="a" style="left:1252px;top:785px;width:66px;height:21px;background:linear-gradient(#e0e0e0,#cdcdcd);border-radius:4px;border:1px solid #8c8c8c;overflow:hidden"><svg width="66" height="21" style="position:absolute;left:-1px;top:-1px"><line x1="7" y1="20" x2="11" y2="1" stroke="#555" stroke-width="0.9"/><line x1="16" y1="20" x2="20" y2="1" stroke="#555" stroke-width="0.9"/><line x1="46" y1="20" x2="50" y2="1" stroke="#555" stroke-width="0.9"/><line x1="55" y1="20" x2="59" y2="1" stroke="#555" stroke-width="0.9"/><g transform="translate(33.0,10.5)"><path d="M-7,4 Q-2,-4 7,-5 L7,0 Q0,1 -4,6z" fill="#9a9a9a" stroke="#666" stroke-width="0.6"/></g></svg></div><div class="a" style="left:864px;top:500px;width:60px;height:60px;overflow:hidden"><div style="position:absolute;left:-864px;top:-500px;width:1000px;height:100px"><div class="a" style="left:833px;top:522px;width:66px;height:21px;background:linear-gradient(#e0e0e0,#cdcdcd);border-radius:4px;border:1px solid #8c8c8c;overflow:hidden"><svg width="66" height="21" style="position:absolute;left:-1px;top:-1px"><line x1="46" y1="20" x2="50" y2="1" stroke="#555" stroke-width="0.9"/><line x1="55" y1="20" x2="59" y2="1" stroke="#555" stroke-width="0.9"/><line x1="29" y1="16" x2="38" y2="3" stroke="#c04040" stroke-width="0.9"/><line x1="27" y1="16" x2="42" y2="16" stroke="#999" stroke-width="0.7"/></svg></div></div></div><svg class="a" style="left:1262px;top:579px" width="9" height="10"><path d="M2,5 V3.5 a2.5,2.5 0 0 1 5,0 V5" fill="none" stroke="#4e5854" stroke-width="1.4"/><rect x="0.5" y="4.5" width="8" height="5" fill="#4e5854"/></svg><svg class="a" style="left:1327px;top:805px" width="9" height="10"><path d="M2,5 V3.5 a2.5,2.5 0 0 1 5,0 V5" fill="none" stroke="#4e5854" stroke-width="1.4"/><rect x="0.5" y="4.5" width="8" height="5" fill="#4e5854"/></svg><svg class="a" style="left:1262px;top:707px" width="11" height="11"><circle cx="5.5" cy="5.5" r="5" fill="#4ea83a"/><circle cx="5.5" cy="5.5" r="2.5" fill="none" stroke="#cde8c0" stroke-width="1.2"/></svg><svg class="a" style="left:864px;top:545px" width="8" height="14"><line x1="1" y1="4" x2="0" y2="13" stroke="#4f7fc0" stroke-width="1.6"/><circle cx="0.5" cy="4.5" r="3.6" fill="#999"/></svg>
<div class="dot" style="left:1215px;top:550px"></div>
<div class="dot" style="left:1215px;top:581px"></div>
<div class="dot" style="left:1215px;top:610px"></div>
<div class="dot" style="left:1215px;top:641px"></div>
<div class="dot" style="left:1195px;top:679px"></div>
<div class="dot" style="left:1208px;top:679px"></div>
<div class="dot" style="left:1221px;top:679px"></div>
<div class="dot" style="left:1234px;top:679px"></div>
<div class="dot" style="left:1215px;top:711px"></div>
<div class="dot" style="left:1428px;top:599px"></div>
<div class="dot" style="left:1428px;top:618px"></div>
<div class="dot" style="left:1428px;top:649px"></div>
<div class="dot" style="left:1387px;top:683px"></div>
<div class="dot" style="left:1387px;top:714px"></div>
<div class="dot" style="left:1268px;top:776px"></div>
<div class="dot" style="left:1294px;top:776px"></div>
<div class="dot" style="left:1281px;top:807px"></div><div class="a" style="left:1284px;top:813px;width:1.5px;height:5px;background:#4f7fc0"></div>
<div class="nname" style="left:1258px;top:560px">curve1</div>
<div class="nname" style="left:1258px;top:620px">resample3</div>
<div class="nname" style="left:1260px;top:689px">attribvop3</div>
<div class="nname" style="left:1471px;top:578px">grid1</div>
<div class="nname" style="left:1471px;top:628px">transform2</div>
<div class="nname" style="left:1430px;top:693px">uvproject3</div>
<div class="a" style="left:1430px;top:717px;font-size:12px;color:#5a8ad0">uv</div>
<div class="nname" style="left:1324px;top:786px">pathdeform1</div>
<div class="nname" style="left:905px;top:524px">line1</div>
<div class="nname" style="left:869px;top:590px">resample2</div>
<div class="nname" style="left:864px;top:687px">ibvop2</div>
<div class="nname" style="left:866px;top:754px">wire2</div>


<div class="a" style="left:866px;top:396px;width:9px;height:23px;background:#1e1e1e;border-right:1px solid #111"></div>
<div class="a" style="left:864px;top:419px;width:1017px;height:1px;background:#151515"></div>
<div class="a" style="left:882px;top:401px;font-size:12.3px;color:#c8c8c8">Add</div>
<div class="a" style="left:919px;top:401px;font-size:12.3px;color:#c8c8c8">Edit</div>
<div class="a" style="left:954px;top:401px;font-size:12.3px;color:#c8c8c8">Go</div>
<div class="a" style="left:984px;top:401px;font-size:12.3px;color:#c8c8c8">View</div>
<div class="a" style="left:1024px;top:401px;font-size:12.3px;color:#c8c8c8">Tools</div>
<div class="a" style="left:1068px;top:401px;font-size:12.3px;color:#c8c8c8">Layout</div>
<div class="a" style="left:1117px;top:401px;font-size:12.3px;color:#c8c8c8">Labs</div>
<div class="a" style="left:1155px;top:401px;font-size:12.3px;color:#c8c8c8">Help</div>
<!-- tab bar -->
<div class="a" style="left:864px;top:341px;width:76px;height:20px;background:linear-gradient(#5f6d57,#56644e)"></div>
<div class="a" style="left:870px;top:346px;font-size:10px;font-style:italic;color:#9aa592">/obj/geo1</div>
<div class="a" style="left:929px;top:345px;font-size:10px;color:#c8c8c8">×</div>
<div class="a" style="left:940px;top:341px;width:2px;height:20px;background:#1b1b1b"></div>
<div class="a" style="left:942px;top:341px;width:76px;height:20px;background:#262626"></div>
<div class="a" style="left:948px;top:346px;font-size:10px;color:#c8c8c8">Tree View</div>
<div class="a" style="left:1006px;top:345px;font-size:10px;color:#c8c8c8">×</div>
<div class="a" style="left:1017px;top:341px;width:2px;height:20px;background:#1b1b1b"></div>
<div class="a" style="left:1019px;top:341px;width:99px;height:20px;background:#262626"></div>
<div class="a" style="left:1025px;top:346px;font-size:10px;color:#c8c8c8">Material Palette</div>
<div class="a" style="left:1107px;top:345px;font-size:10px;color:#c8c8c8">×</div>
<div class="a" style="left:1118px;top:341px;width:2px;height:20px;background:#1b1b1b"></div>
<div class="a" style="left:1120px;top:341px;width:93px;height:20px;background:#262626"></div>
<div class="a" style="left:1126px;top:346px;font-size:10px;color:#c8c8c8">Asset Browser</div>
<div class="a" style="left:1201px;top:345px;font-size:10px;color:#c8c8c8">×</div>
<div class="a" style="left:1213px;top:341px;width:2px;height:20px;background:#1b1b1b"></div>
<svg class="a" style="left:1221px;top:345px" width="12" height="12"><rect x="5" y="1" width="2" height="10" fill="#d0d0d0"/><rect x="1" y="5" width="10" height="2" fill="#d0d0d0"/></svg>
<div class="a" style="left:1862px;top:348px;width:10px;height:8px;background:#d0d0d0"></div>
<div class="a" style="left:1372px;top:337px;width:20px;height:3px;background:repeating-linear-gradient(90deg,#777 0 1px,transparent 1px 2px)"></div>
<div class="a" style="left:1345px;top:336px;width:0;height:0;border-bottom:3px solid #888;border-left:3px solid transparent;border-right:3px solid transparent"></div>
<div class="a" style="left:1407px;top:337px;width:0;height:0;border-top:3px solid #888;border-left:3px solid transparent;border-right:3px solid transparent"></div>
<!-- net nav -->
<svg class="a" style="left:866px;top:368px" width="50" height="22">
<polygon points="3,9 10,2 10,6 18,6 18,13 10,13 10,17" fill="#c9cbc6" stroke="#1d1f1c" stroke-width="1.2"/>
<polygon points="16,14 20,18 16,21" fill="#9a9c98"/>
<polygon points="42,9 35,2 35,6 28,6 28,13 35,13 35,17" fill="#6c7567" stroke="#4a5046" stroke-width="0.5"/>
<polygon points="40,14 44,18 40,21" fill="#3c4238"/>
</svg>
<svg class="a" style="left:925px;top:369px" width="16" height="18"><use href="#i-obj"/></svg>
<div class="a" style="left:946px;top:371px;font-size:12px;color:#cfcfcf">obj</div>
<svg class="a" style="left:968px;top:367px" width="8" height="23"><use href="#i-chev"/></svg>
<svg class="a" style="left:981px;top:371px" width="18" height="15"><use href="#i-geo"/></svg>
<div class="a" style="left:1003px;top:371px;font-size:12px;color:#cfcfcf">geo1</div>
<div class="a" style="left:1821px;top:367px;width:18px;height:22px;background:#262626"></div>
<div class="a" style="left:1826px;top:375px;width:0;height:0;border-top:6px solid #8a8a8a;border-left:4px solid transparent;border-right:4px solid transparent"></div>
<svg class="a" style="left:1849px;top:371px" width="18" height="14"><polygon points="0,7 6,5.5 6,8.5" fill="#bbb"/><rect x="6" y="6" width="3" height="2" fill="#bbb"/><polygon points="9,2 13,4 13,10 9,12" fill="#c8c8c8"/><rect x="13" y="1" width="2.5" height="12" fill="#d8d8d8"/></svg>
<svg class="a" style="left:1872px;top:368px" width="12" height="20"><circle cx="9" cy="10" r="8" fill="none" stroke="#4a78c0" stroke-width="1.5"/><circle cx="9" cy="10" r="5" fill="none" stroke="#4a78c0" stroke-width="1.2"/><circle cx="9" cy="10" r="1.5" fill="#4a78c0"/></svg>
<div class="a" style="left:864px;top:393px;width:1017px;height:1px;background:#111"></div>
<!-- net toolbar icons -->
<svg class="a" style="left:1580px;top:399px" width="301" height="18">
<g stroke="#c8c8c8" stroke-width="2.2"><line x1="4" y1="3" x2="17" y2="16"/><line x1="16" y1="3" x2="4" y2="16"/></g><circle cx="15" cy="4" r="2.5" fill="none" stroke="#c8c8c8" stroke-width="1.5"/>
<g fill="#bbb"><rect x="30" y="2" width="3" height="3"/><rect x="31" y="5" width="1.2" height="11"/><rect x="33" y="7" width="5" height="2.5"/><rect x="33" y="11" width="5" height="2.5"/><rect x="33" y="14" width="5" height="2.5"/></g>
<rect x="53" y="2" width="12" height="15" fill="#cfd1c8" stroke="#333" stroke-width="0.6"/><g stroke="#777" stroke-width="0.8"><line x1="53" y1="6" x2="65" y2="6"/><line x1="53" y1="9.5" x2="65" y2="9.5"/><line x1="53" y1="13" x2="65" y2="13"/></g>
<rect x="93" y="3" width="13" height="13" fill="#ddd"/><rect x="94.5" y="4.5" width="3" height="3" fill="#c22"/><rect x="98.5" y="4.5" width="3" height="3" fill="#e62"/><rect x="102.5" y="4.5" width="3" height="3" fill="#dc2"/><rect x="94.5" y="8.5" width="3" height="3" fill="#24a"/><rect x="98.5" y="8.5" width="3" height="3" fill="#3a3"/><rect x="102.5" y="8.5" width="3" height="3" fill="#59d"/><rect x="94.5" y="12.5" width="3" height="3" fill="#111"/><rect x="98.5" y="12.5" width="3" height="3" fill="#888"/><rect x="102.5" y="12.5" width="3" height="3" fill="#aaa"/>
<rect x="117" y="3" width="14" height="14" fill="none" stroke="#999" stroke-width="1"/><g fill="#aaa"><rect x="119" y="5" width="4" height="2"/><rect x="125" y="5" width="4" height="2"/><rect x="119" y="9" width="4" height="2"/><rect x="125" y="9" width="4" height="2"/><rect x="119" y="13" width="4" height="2"/><rect x="125" y="13" width="4" height="2"/></g>
<rect x="158" y="3" width="14" height="13" fill="#ddd" stroke="#333" stroke-width="0.6"/><rect x="160" y="6" width="6" height="3" fill="none" stroke="#222" stroke-width="1"/><rect x="164" y="11" width="6" height="3" fill="none" stroke="#222" stroke-width="1"/>
<polygon points="181,3 196,3 196,13 192,17 181,17" fill="#e0c83a" stroke="#6a5a10" stroke-width="0.6"/><g stroke="#333" stroke-width="1"><line x1="183" y1="6" x2="194" y2="6"/><line x1="183" y1="9" x2="194" y2="9"/><line x1="183" y1="12" x2="190" y2="12"/></g>
<rect x="205" y="2" width="14" height="13" fill="#5aa0d8" stroke="#ccc" stroke-width="0.8"/><circle cx="209" cy="6" r="2" fill="#e8d040"/><polygon points="206,14 211,9 214,12 218,8 218,14" fill="#6ac0a0"/><g stroke="#eee" stroke-width="1.6"><line x1="217" y1="11" x2="217" y2="18"/><line x1="213.5" y1="14.5" x2="220.5" y2="14.5"/></g>
<polygon points="229,6 237,3 245,6 245,15 237,17 229,15" fill="#d08a30"/><polygon points="229,6 237,3 245,6 237,9" fill="#f0b060"/>
<circle cx="276" cy="8" r="5.5" fill="#445560" stroke="#cfcfcf" stroke-width="1.5"/><line x1="280" y1="12" x2="284" y2="16" stroke="#cfcfcf" stroke-width="2"/>
<rect x="294" y="3" width="8" height="13" fill="#ccc"/><circle cx="300" cy="9" r="3" fill="#333"/>
</svg>
<svg class="a" style="left:866px;top:397px" width="9" height="22"><polygon points="4.5,2 8,8 1,8" fill="#ddd"/></svg>
<!-- ============ TIMELINE ============ -->
<div class="a" style="left:0;top:818px;width:1881px;height:43px;background:#262626"></div>
<div class="a" style="left:0;top:819px;width:1881px;height:1px;background:#5a5a5a"></div>
<div class="tbtn" style="left:-4px;width:19px"></div>
<div class="tbtn" style="left:16px;width:27px"></div>
<div class="tbtn" style="left:43px;width:27px;background:#586e8c"></div>
<div class="tbtn" style="left:70px;width:27px"></div>
<div class="tbtn" style="left:97px;width:27px"></div>
<div class="a" style="left:127px;top:828px;width:46px;height:26px;background:#090909;border:1px solid #1c1c1c"></div>
<div class="a" style="left:130px;top:834px;font-family:'Liberation Mono',monospace;font-size:11.5px;color:#d8d8d8">800</div>
<div class="tbtn" style="left:176px;width:14px"></div>
<div class="tbtn" style="left:190px;width:14px"></div>
<svg class="a" style="left:0;top:827px" width="210" height="28">
<g fill="#bcbcbc">
<polygon points="3,8 -2,13 3,18"/><polygon points="12,8 6,13 12,18"/>
<polygon points="35,7 26,13 35,20"/>
<rect x="51" y="7" width="12" height="12" fill="#d0d0d0" stroke="#222" stroke-width="0.6"/>
<polygon points="79,7 88,13 79,20"/>
<polygon points="101,8 107,13 101,18"/><polygon points="108,8 114,13 108,18"/><rect x="115" y="8" width="3" height="10"/>
<polygon points="184,9 180,13 184,17"/><rect x="185" y="9" width="2.5" height="8"/>
<rect x="195" y="9" width="2.5" height="8"/><polygon points="198,9 202,13 198,17"/>
</g>
</svg>
<div class="a" style="left:209px;top:842px;width:1433px;height:1px;background:#bdbdbd"></div>
<div class="a" style="left:217.8px;top:838px;width:1px;height:9px;background:#a9a9a9"></div>
<div class="a" style="left:228.6px;top:838px;width:1px;height:9px;background:#a9a9a9"></div>
<div class="a" style="left:239.3px;top:838px;width:1px;height:9px;background:#a9a9a9"></div>
<div class="a" style="left:250.0px;top:838px;width:1px;height:9px;background:#a9a9a9"></div>
<div class="a" style="left:260.8px;top:838px;width:1px;height:9px;background:#a9a9a9"></div>
<div class="a" style="left:271.5px;top:838px;width:1px;height:9px;background:#a9a9a9"></div>
<div class="a" style="left:282.3px;top:838px;width:1px;height:9px;background:#a9a9a9"></div>
<div class="a" style="left:293.0px;top:838px;width:1px;height:9px;background:#a9a9a9"></div>
<div class="a" style="left:303.8px;top:838px;width:1px;height:9px;background:#a9a9a9"></div>
<div class="a" style="left:314.5px;top:838px;width:1px;height:9px;background:#a9a9a9"></div>
<div class="a" style="left:325.3px;top:838px;width:1px;height:9px;background:#a9a9a9"></div>
<div class="a" style="left:336.0px;top:838px;width:1px;height:9px;background:#a9a9a9"></div>
<div class="a" style="left:346.8px;top:838px;width:1px;height:9px;background:#a9a9a9"></div>
<div class="a" style="left:357.5px;top:838px;width:1px;height:9px;background:#a9a9a9"></div>
<div class="a" style="left:368.3px;top:838px;width:1px;height:9px;background:#a9a9a9"></div>
<div class="a" style="left:379.0px;top:838px;width:1px;height:9px;background:#a9a9a9"></div>
<div class="a" style="left:389.8px;top:838px;width:1px;height:9px;background:#a9a9a9"></div>
<div class="a" style="left:400.5px;top:838px;width:1px;height:9px;background:#a9a9a9"></div>
<div class="a" style="left:411.3px;top:838px;width:1px;height:9px;background:#a9a9a9"></div>
<div class="a" style="left:421.9px;top:834px;width:1.3px;height:16px;background:#bdbdbd"></div>
<div class="a" style="left:432.8px;top:838px;width:1px;height:9px;background:#a9a9a9"></div>
<div class="a" style="left:443.5px;top:838px;width:1px;height:9px;background:#a9a9a9"></div>
<div class="a" style="left:454.2px;top:838px;width:1px;height:9px;background:#a9a9a9"></div>
<div class="a" style="left:465.0px;top:838px;width:1px;height:9px;background:#a9a9a9"></div>
<div class="a" style="left:475.7px;top:838px;width:1px;height:9px;background:#a9a9a9"></div>
<div class="a" style="left:486.5px;top:838px;width:1px;height:9px;background:#a9a9a9"></div>
<div class="a" style="left:497.2px;top:838px;width:1px;height:9px;background:#a9a9a9"></div>
<div class="a" style="left:508.0px;top:838px;width:1px;height:9px;background:#a9a9a9"></div>
<div class="a" style="left:518.7px;top:838px;width:1px;height:9px;background:#a9a9a9"></div>
<div class="a" style="left:529.5px;top:838px;width:1px;height:9px;background:#a9a9a9"></div>
<div class="a" style="left:540.2px;top:838px;width:1px;height:9px;background:#a9a9a9"></div>
<div class="a" style="left:551.0px;top:838px;width:1px;height:9px;background:#a9a9a9"></div>
<div class="a" style="left:561.7px;top:838px;width:1px;height:9px;background:#a9a9a9"></div>
<div class="a" style="left:572.5px;top:838px;width:1px;height:9px;background:#a9a9a9"></div>
<div class="a" style="left:583.2px;top:838px;width:1px;height:9px;background:#a9a9a9"></div>
<div class="a" style="left:594.0px;top:838px;width:1px;height:9px;background:#a9a9a9"></div>
<div class="a" style="left:604.7px;top:838px;width:1px;height:9px;background:#a9a9a9"></div>
<div class="a" style="left:615.5px;top:838px;width:1px;height:9px;background:#a9a9a9"></div>
<div class="a" style="left:626.2px;top:838px;width:1px;height:9px;background:#a9a9a9"></div>
<div class="a" style="left:636.8px;top:834px;width:1.3px;height:16px;background:#bdbdbd"></div>
<div class="a" style="left:647.7px;top:838px;width:1px;height:9px;background:#a9a9a9"></div>
<div class="a" style="left:658.4px;top:838px;width:1px;height:9px;background:#a9a9a9"></div>
<div class="a" style="left:669.2px;top:838px;width:1px;height:9px;background:#a9a9a9"></div>
<div class="a" style="left:679.9px;top:838px;width:1px;height:9px;background:#a9a9a9"></div>
<div class="a" style="left:690.7px;top:838px;width:1px;height:9px;background:#a9a9a9"></div>
<div class="a" style="left:701.4px;top:838px;width:1px;height:9px;background:#a9a9a9"></div>
<div class="a" style="left:712.2px;top:838px;width:1px;height:9px;background:#a9a9a9"></div>
<div class="a" style="left:722.9px;top:838px;width:1px;height:9px;background:#a9a9a9"></div>
<div class="a" style="left:733.7px;top:838px;width:1px;height:9px;background:#a9a9a9"></div>
<div class="a" style="left:744.4px;top:838px;width:1px;height:9px;background:#a9a9a9"></div>
<div class="a" style="left:755.2px;top:838px;width:1px;height:9px;background:#a9a9a9"></div>
<div class="a" style="left:765.9px;top:838px;width:1px;height:9px;background:#a9a9a9"></div>
<div class="a" style="left:776.7px;top:838px;width:1px;height:9px;background:#a9a9a9"></div>
<div class="a" style="left:787.4px;top:838px;width:1px;height:9px;background:#a9a9a9"></div>
<div class="a" style="left:798.2px;top:838px;width:1px;height:9px;background:#a9a9a9"></div>
<div class="a" style="left:808.9px;top:838px;width:1px;height:9px;background:#a9a9a9"></div>
<div class="a" style="left:819.6px;top:838px;width:1px;height:9px;background:#a9a9a9"></div>
<div class="a" style="left:830.4px;top:838px;width:1px;height:9px;background:#a9a9a9"></div>
<div class="a" style="left:841.1px;top:838px;width:1px;height:9px;background:#a9a9a9"></div>
<div class="a" style="left:851.8px;top:834px;width:1.3px;height:16px;background:#bdbdbd"></div>
<div class="a" style="left:862.6px;top:838px;width:1px;height:9px;background:#a9a9a9"></div>
<div class="a" style="left:873.4px;top:838px;width:1px;height:9px;background:#a9a9a9"></div>
<div class="a" style="left:884.1px;top:838px;width:1px;height:9px;background:#a9a9a9"></div>
<div class="a" style="left:894.9px;top:838px;width:1px;height:9px;background:#a9a9a9"></div>
<div class="a" style="left:905.6px;top:838px;width:1px;height:9px;background:#a9a9a9"></div>
<div class="a" style="left:916.4px;top:838px;width:1px;height:9px;background:#a9a9a9"></div>
<div class="a" style="left:927.1px;top:838px;width:1px;height:9px;background:#a9a9a9"></div>
<div class="a" style="left:937.9px;top:838px;width:1px;height:9px;background:#a9a9a9"></div>
<div class="a" style="left:948.6px;top:838px;width:1px;height:9px;background:#a9a9a9"></div>
<div class="a" style="left:959.4px;top:838px;width:1px;height:9px;background:#a9a9a9"></div>
<div class="a" style="left:970.1px;top:838px;width:1px;height:9px;background:#a9a9a9"></div>
<div class="a" style="left:980.9px;top:838px;width:1px;height:9px;background:#a9a9a9"></div>
<div class="a" style="left:991.6px;top:838px;width:1px;height:9px;background:#a9a9a9"></div>
<div class="a" style="left:1002.4px;top:838px;width:1px;height:9px;background:#a9a9a9"></div>
<div class="a" style="left:1013.1px;top:838px;width:1px;height:9px;background:#a9a9a9"></div>
<div class="a" style="left:1023.8px;top:838px;width:1px;height:9px;background:#a9a9a9"></div>
<div class="a" style="left:1034.6px;top:838px;width:1px;height:9px;background:#a9a9a9"></div>
<div class="a" style="left:1045.3px;top:838px;width:1px;height:9px;background:#a9a9a9"></div>
<div class="a" style="left:1056.1px;top:838px;width:1px;height:9px;background:#a9a9a9"></div>
<div class="a" style="left:1066.7px;top:834px;width:1.3px;height:16px;background:#bdbdbd"></div>
<div class="a" style="left:1077.6px;top:838px;width:1px;height:9px;background:#a9a9a9"></div>
<div class="a" style="left:1088.3px;top:838px;width:1px;height:9px;background:#a9a9a9"></div>
<div class="a" style="left:1099.1px;top:838px;width:1px;height:9px;background:#a9a9a9"></div>
<div class="a" style="left:1109.8px;top:838px;width:1px;height:9px;background:#a9a9a9"></div>
<div class="a" style="left:1120.6px;top:838px;width:1px;height:9px;background:#a9a9a9"></div>
<div class="a" style="left:1131.3px;top:838px;width:1px;height:9px;background:#a9a9a9"></div>
<div class="a" style="left:1142.1px;top:838px;width:1px;height:9px;background:#a9a9a9"></div>
<div class="a" style="left:1152.8px;top:838px;width:1px;height:9px;background:#a9a9a9"></div>
<div class="a" style="left:1163.6px;top:838px;width:1px;height:9px;background:#a9a9a9"></div>
<div class="a" style="left:1174.3px;top:838px;width:1px;height:9px;background:#a9a9a9"></div>
<div class="a" style="left:1185.1px;top:838px;width:1px;height:9px;background:#a9a9a9"></div>
<div class="a" style="left:1195.8px;top:838px;width:1px;height:9px;background:#a9a9a9"></div>
<div class="a" style="left:1206.5px;top:838px;width:1px;height:9px;background:#a9a9a9"></div>
<div class="a" style="left:1217.3px;top:838px;width:1px;height:9px;background:#a9a9a9"></div>
<div class="a" style="left:1228.0px;top:838px;width:1px;height:9px;background:#a9a9a9"></div>
<div class="a" style="left:1238.8px;top:838px;width:1px;height:9px;background:#a9a9a9"></div>
<div class="a" style="left:1249.5px;top:838px;width:1px;height:9px;background:#a9a9a9"></div>
<div class="a" style="left:1260.3px;top:838px;width:1px;height:9px;background:#a9a9a9"></div>
<div class="a" style="left:1271.0px;top:838px;width:1px;height:9px;background:#a9a9a9"></div>
<div class="a" style="left:1281.7px;top:834px;width:1.3px;height:16px;background:#bdbdbd"></div>
<div class="a" style="left:1292.5px;top:838px;width:1px;height:9px;background:#a9a9a9"></div>
<div class="a" style="left:1303.3px;top:838px;width:1px;height:9px;background:#a9a9a9"></div>
<div class="a" style="left:1314.0px;top:838px;width:1px;height:9px;background:#a9a9a9"></div>
<div class="a" style="left:1324.8px;top:838px;width:1px;height:9px;background:#a9a9a9"></div>
<div class="a" style="left:1335.5px;top:838px;width:1px;height:9px;background:#a9a9a9"></div>
<div class="a" style="left:1346.3px;top:838px;width:1px;height:9px;background:#a9a9a9"></div>
<div class="a" style="left:1357.0px;top:838px;width:1px;height:9px;background:#a9a9a9"></div>
<div class="a" style="left:1367.8px;top:838px;width:1px;height:9px;background:#a9a9a9"></div>
<div class="a" style="left:1378.5px;top:838px;width:1px;height:9px;background:#a9a9a9"></div>
<div class="a" style="left:1389.3px;top:838px;width:1px;height:9px;background:#a9a9a9"></div>
<div class="a" style="left:1400.0px;top:838px;width:1px;height:9px;background:#a9a9a9"></div>
<div class="a" style="left:1410.7px;top:838px;width:1px;height:9px;background:#a9a9a9"></div>
<div class="a" style="left:1421.5px;top:838px;width:1px;height:9px;background:#a9a9a9"></div>
<div class="a" style="left:1432.2px;top:838px;width:1px;height:9px;background:#a9a9a9"></div>
<div class="a" style="left:1443.0px;top:838px;width:1px;height:9px;background:#a9a9a9"></div>
<div class="a" style="left:1453.7px;top:838px;width:1px;height:9px;background:#a9a9a9"></div>
<div class="a" style="left:1464.5px;top:838px;width:1px;height:9px;background:#a9a9a9"></div>
<div class="a" style="left:1475.2px;top:838px;width:1px;height:9px;background:#a9a9a9"></div>
<div class="a" style="left:1486.0px;top:838px;width:1px;height:9px;background:#a9a9a9"></div>
<div class="a" style="left:1496.6px;top:834px;width:1.3px;height:16px;background:#bdbdbd"></div>
<div class="a" style="left:1507.5px;top:838px;width:1px;height:9px;background:#a9a9a9"></div>
<div class="a" style="left:1518.2px;top:838px;width:1px;height:9px;background:#a9a9a9"></div>
<div class="a" style="left:1529.0px;top:838px;width:1px;height:9px;background:#a9a9a9"></div>
<div class="a" style="left:1539.7px;top:838px;width:1px;height:9px;background:#a9a9a9"></div>
<div class="a" style="left:1550.5px;top:838px;width:1px;height:9px;background:#a9a9a9"></div>
<div class="a" style="left:1561.2px;top:838px;width:1px;height:9px;background:#a9a9a9"></div>
<div class="a" style="left:1572.0px;top:838px;width:1px;height:9px;background:#a9a9a9"></div>
<div class="a" style="left:1582.7px;top:838px;width:1px;height:9px;background:#a9a9a9"></div>
<div class="a" style="left:1593.4px;top:838px;width:1px;height:9px;background:#a9a9a9"></div>
<div class="a" style="left:1604.2px;top:838px;width:1px;height:9px;background:#a9a9a9"></div>
<div class="a" style="left:1614.9px;top:838px;width:1px;height:9px;background:#a9a9a9"></div>
<div class="a" style="left:1625.7px;top:838px;width:1px;height:9px;background:#a9a9a9"></div>
<div class="a" style="left:1636.4px;top:838px;width:1px;height:9px;background:#a9a9a9"></div>
<div class="a" style="left:211.3px;top:820px;font-size:10px;color:#a0a0a0">1</div>
<div class="a" style="left:422.5px;top:820px;font-size:10px;color:#a0a0a0">120</div>
<div class="a" style="left:637.4px;top:820px;font-size:10px;color:#a0a0a0">240</div>
<div class="a" style="left:852.4px;top:820px;font-size:10px;color:#a0a0a0">360</div>
<div class="a" style="left:1067.3px;top:820px;font-size:10px;color:#a0a0a0">480</div>
<div class="a" style="left:1282.3px;top:820px;font-size:10px;color:#a0a0a0">600</div>
<div class="a" style="left:1497.2px;top:820px;font-size:10px;color:#a0a0a0">720</div>
<div class="a" style="left:1615px;top:821px;width:27px;height:18px;background:#000;border:1px solid #e8e8e8"></div>
<div class="a" style="left:1618px;top:823px;font-size:11.5px;color:#f0f0f0">800</div>
<div class="a" style="left:1645px;top:833px;width:40px;height:40px;border-radius:50%;background:#262626;border:1px solid #1b1b1b"></div>
<div class="a" style="left:1683px;top:843px;width:16px;height:18px;background:#303030;border:1px solid #1e1e1e"></div>
<div class="a" style="left:1687px;top:848px;width:0;height:0;border-top:6px solid #9a9a9a;border-left:4px solid transparent;border-right:4px solid transparent"></div>
<div class="a" style="left:1707px;top:828px;width:23px;height:24px;background:#383838;border:1px solid #1a1a1a"></div>
<div class="a" style="left:1736px;top:828px;width:150px;height:23px;background:linear-gradient(#3c3c3c,#333);border:1px solid #1a1a1a;border-radius:2px"></div>
<div class="a" style="left:1753px;top:833px;font-size:10.75px;color:#bdbdbd">0 keys, 0/0 channels</div>
<div class="a" style="left:1707px;top:855px;width:23px;height:10px;background:#383838;border:1px solid #1a1a1a"></div>
<svg class="a" style="left:1615px;top:821px" width="30" height="24"><polygon points="20,17 26.5,17 26.5,22" fill="#000" stroke="#e8e8e8" stroke-width="1"/></svg>
<svg class="a" style="left:1652px;top:840px" width="26" height="21"><circle cx="14" cy="5" r="4" fill="none" stroke="#555" stroke-width="2.2"/><line x1="11" y1="8" x2="5" y2="17" stroke="#555" stroke-width="2.2"/><line x1="7" y1="14" x2="10" y2="16" stroke="#555" stroke-width="1.8"/></svg>
<svg class="a" style="left:1709px;top:830px" width="20" height="20"><rect x="1" y="2" width="14" height="15" fill="#aaa"/><rect x="2" y="5" width="2" height="2.5" fill="#d22"/><rect x="2" y="8" width="2" height="2.5" fill="#2a2"/><rect x="2" y="11" width="2" height="2.5" fill="#25d"/><rect x="2" y="14" width="2" height="2.5" fill="#2a2"/><path d="M6,9 a4.5,4.5 0 0 1 8,-2" fill="none" stroke="#222" stroke-width="1.6"/><path d="M14,11 a4.5,4.5 0 0 1 -8,2" fill="none" stroke="#222" stroke-width="1.6"/><polygon points="15,13 19,16 15,19" fill="#888"/></svg>
<div class="a" style="left:1873px;top:834px;width:0;height:0;border-bottom:9px solid #777;border-left:6px solid transparent;border-right:6px solid transparent"></div>

<div class="a" style="left:1734px;top:855px;width:150px;height:10px;background:#3a3a3a"></div>
</body></html>
